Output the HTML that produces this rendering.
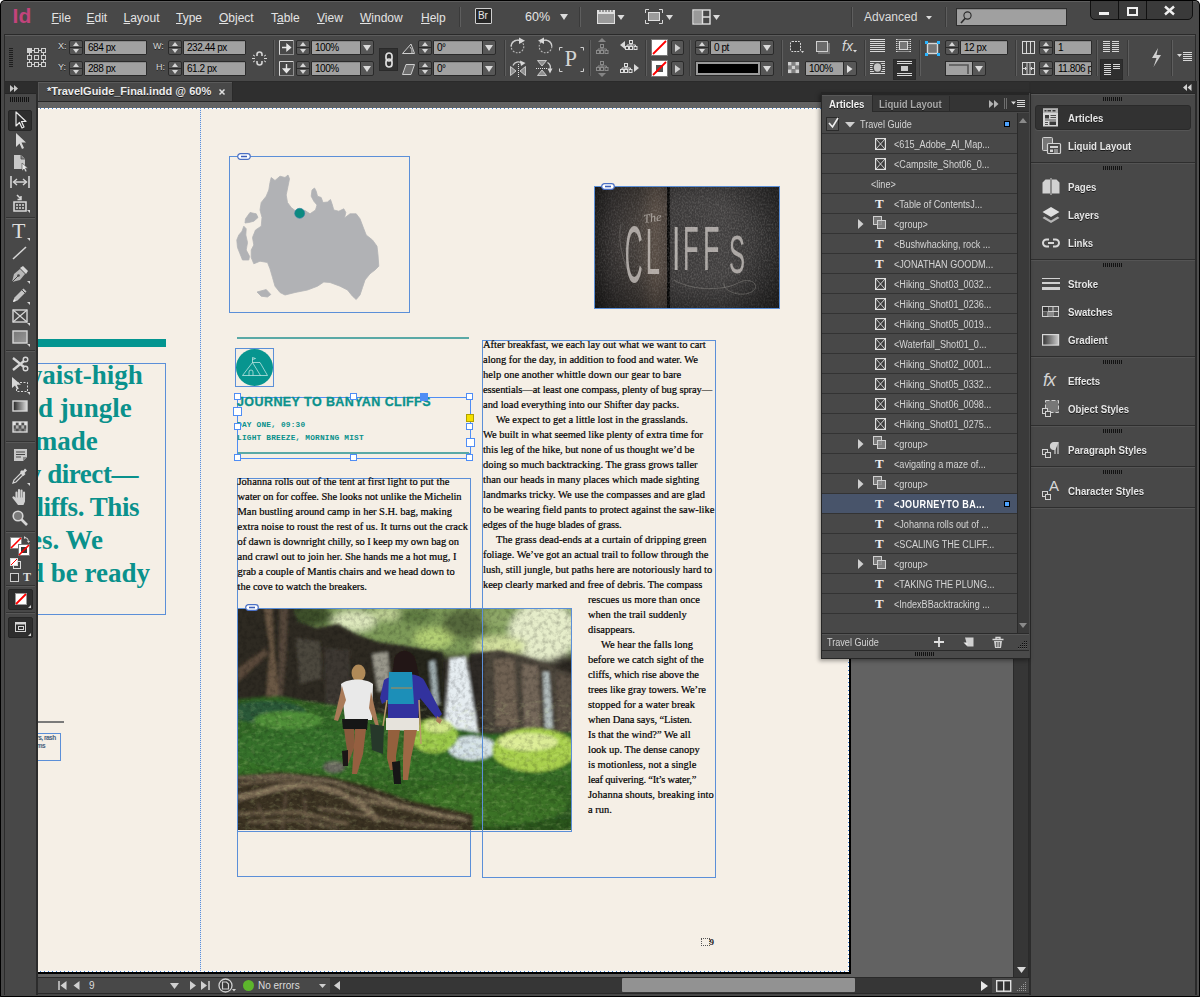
<!DOCTYPE html>
<html lang="en"><head><meta charset="utf-8"><title>TravelGuide_Final.indd @ 60% - InDesign</title>
<style>
html,body{margin:0;padding:0;background:#fff;}
body{width:1200px;height:997px;overflow:hidden;position:relative;font-family:"Liberation Sans",sans-serif;font-size:11px;color:#dcdcdc;}
div,svg,i,span.a{position:absolute;box-sizing:content-box;}
svg{overflow:visible;}
.t{white-space:nowrap;line-height:1;}
#win{left:0;top:0;width:1200px;height:997px;border-radius:5px 5px 0 0;background:#484848;overflow:hidden;}
#winb{left:0;top:0;width:1198px;height:995px;border:1px solid #000;border-radius:5px 5px 0 0;pointer-events:none;}
.menu{font-size:12px;color:#e4e4e4;top:12px;}
.menu u{text-decoration:underline;text-underline-offset:1px;}
.lbl{font-size:9px;color:#d8d8d8;text-shadow:0 1px 0 #222;}
.inp{height:15px;border:1px solid #2a2a2a;background:#a1a1a1;box-shadow:inset 0 1px 0 #8a8a8a;color:#000;font-size:10px;letter-spacing:-0.45px;line-height:14px;padding-left:3px;box-sizing:border-box;white-space:nowrap;overflow:hidden;border-radius:1px;}
.spin{width:12px;height:13px;border:1px solid #2a2a2a;background:#575757;border-radius:2px;}
.spin:before{content:"";position:absolute;left:0;top:6px;width:12px;height:1px;background:#2a2a2a;}
.spin i.u{left:3px;top:1px;width:0;height:0;border-left:3px solid transparent;border-right:3px solid transparent;border-bottom:4px solid #d6d6d6;}
.spin i.d{left:3px;top:8px;width:0;height:0;border-left:3px solid transparent;border-right:3px solid transparent;border-top:4px solid #d6d6d6;}
.dd{height:13px;border:1px solid #2a2a2a;background:#575757;border-radius:0 2px 2px 0;}
.dd i{left:50%;margin-left:-4px;top:4px;width:0;height:0;border-left:4px solid transparent;border-right:4px solid transparent;border-top:6px solid #dadada;}
.vsep{width:1px;background:#3a3a3a;box-shadow:1px 0 0 #5e5e5e;}
.grip{background:repeating-linear-gradient(90deg,#121212 0,#121212 1px,transparent 1px,transparent 2px);}
.gripv{background:repeating-linear-gradient(180deg,#1e1e1e 0,#1e1e1e 1px,transparent 1px,transparent 2px);}
.ptxt{font-size:10px;color:#d4d4d4;transform:scaleX(0.91);transform-origin:0 0;}
.sx{transform:scaleX(0.91);transform-origin:0 0;}
.row{left:0;width:195px;height:19px;border-bottom:1px solid #363636;}
.dock{font-size:10.5px;transform:scaleX(0.92);transform-origin:0 0;font-weight:bold;color:#e6e6e6;text-shadow:0 1px 0 #1a1a1a;}
.frame{border:1px solid #5b8fd8;}
.h{width:5px;height:5px;border:1px solid #4f8df5;background:#fff;}
.body{font-family:"Liberation Serif",serif;color:#000;-webkit-text-stroke:0.2px #000;font-size:10.5px;line-height:15px;height:15px;white-space:nowrap;}
.big{font-family:"Liberation Serif",serif;font-weight:bold;color:#0a918c;font-size:27px;line-height:33px;white-space:nowrap;}
</style></head>
<body><div id="win">
<div style="left:38px;top:101px;width:975px;height:876px;background:#626262;"></div>
<div style="left:38px;top:108px;width:811px;height:864px;background:#f5efe6;"></div>
<div style="left:38px;top:108px;width:812px;height:1px;background:repeating-linear-gradient(90deg,#fff 0,#fff 2px,#3f7fd0 2px,#3f7fd0 3px,#fff 3px,#fff 4px);"></div>
<div style="left:38px;top:971px;width:811px;height:1px;background:repeating-linear-gradient(90deg,#fff 0,#fff 2px,#3f7fd0 2px,#3f7fd0 3px,#fff 3px,#fff 4px);"></div>
<div style="left:38px;top:972px;width:813px;height:2px;background:#000;"></div>
<div style="left:848px;top:108px;width:1px;height:864px;background:repeating-linear-gradient(180deg,#fff 0,#fff 2px,#3f7fd0 2px,#3f7fd0 3px,#fff 3px,#fff 4px);"></div>
<div style="left:849px;top:108px;width:2px;height:866px;background:#000;"></div>
<div style="left:200px;top:108px;width:1px;height:864px;background:repeating-linear-gradient(180deg,#5b8fd8 0,#5b8fd8 1px,#dfe6f2 1px,#dfe6f2 2px);"></div>
<div style="left:38px;top:339px;width:128px;height:8px;background:#039590;"></div>
<div class="frame" style="left:37px;top:363px;width:127px;height:250px;"></div>
<div style="left:38px;top:359px;width:128px;height:240px;overflow:hidden;"><div class="big" style="right:23.2px;top:0px;">waist-high</div><div class="big" style="right:34.2px;top:33px;">d jungle</div><div class="big" style="right:68.3px;top:66px;">made</div><div class="big" style="right:28.0px;top:99px; letter-spacing:-0.45px;">y direct—</div><div class="big" style="right:27.0px;top:132px; letter-spacing:-0.45px;">liffs. This</div><div class="big" style="right:63.0px;top:165px;">es. We</div><div class="big" style="right:16.0px;top:198px;">d be ready</div></div>
<div style="left:38px;top:721px;width:26px;height:2px;background:#7a7a7a;"></div>
<div class="frame" style="left:37px;top:733px;width:22px;height:26px;"></div>
<div style="left:38px;top:733px;width:30px;height:12px;overflow:hidden;"><div class="t" style="right:12.3px;top:1.5px;font-size:6.5px;font-weight:bold;color:#46607e;letter-spacing:-0.5px;">ers, rash</div></div>
<div style="left:38px;top:742px;width:30px;height:12px;overflow:hidden;"><div class="t" style="right:22.8px;top:1px;font-size:6.5px;font-weight:bold;color:#46607e;letter-spacing:-0.5px;">ems</div></div>
<div class="frame" style="left:229px;top:156px;width:179px;height:155px;"></div>
<svg style="left:0;top:0" width="420" height="320" viewBox="0 0 420 320"><path d="M271.2 177.5 L275.0 180.5 L280.0 176.2 L285.0 177.5 L288.0 175.0 L289.5 178.8 L288.0 186.2 L286.2 195.0 L287.5 202.5 L291.2 207.5 L295.0 210.5 L300.0 209.5 L305.0 210.5 L310.0 213.8 L315.5 210.0 L317.0 205.0 L313.8 201.2 L311.2 196.2 L312.0 190.0 L314.5 188.0 L316.2 191.2 L317.5 196.2 L321.2 197.5 L323.0 202.5 L327.5 202.0 L330.5 199.5 L332.0 203.8 L333.8 210.0 L338.8 211.2 L343.8 208.8 L345.8 212.5 L344.5 218.0 L350.0 213.8 L356.2 213.8 L360.0 218.8 L363.8 228.8 L366.2 235.0 L372.5 240.0 L377.0 246.2 L378.0 255.0 L378.8 266.2 L375.0 270.0 L370.0 273.8 L365.0 280.0 L362.5 287.5 L360.0 295.0 L356.2 299.5 L352.5 296.2 L347.5 290.0 L340.0 286.2 L330.0 282.5 L323.8 282.0 L317.5 286.2 L307.5 290.0 L295.0 292.5 L285.0 295.0 L280.0 292.5 L275.0 286.2 L272.5 277.5 L270.0 268.8 L267.5 262.5 L260.0 261.2 L253.8 263.8 L251.2 257.5 L251.2 250.0 L253.8 245.0 L252.5 237.5 L255.5 230.0 L261.2 226.2 L262.0 217.5 L260.0 210.0 L261.2 202.5 L266.2 196.2 L268.8 190.0 L270.0 182.5Z M250.0 212.5 L256.2 213.8 L258.0 217.5 L253.8 221.2 L248.8 222.5 L245.0 223.0 L245.5 218.8Z M243.8 226.2 L246.2 228.8 L245.8 235.0 L247.5 242.5 L246.2 250.0 L249.5 256.2 L248.8 260.0 L242.5 260.0 L240.0 253.8 L237.5 247.5 L236.8 240.0 L238.8 235.0 L242.0 231.2Z M257.0 292.0 L266.2 289.5 L270.8 294.5 L267.5 297.0 L261.2 296.2Z" fill="#b1b2b5" stroke="#b1b2b5" stroke-width="0.800" stroke-linejoin="round"/><circle cx="299.700" cy="213.300" r="5" fill="#0d8a80"/><circle cx="299.700" cy="213.300" r="5" fill="none" stroke="#2f7fa8" stroke-width="0.800" opacity="0.700"/></svg>
<svg style="left:237px;top:152.5px;" width="14" height="7" viewBox="0 0 14 7"><rect x="0.700" y="0.700" width="12.600" height="5.600" rx="2.800" fill="#fff" stroke="#4a6fc4" stroke-width="1.200"/><path d="M4 3.500h6" stroke="#3d5fb8" stroke-width="1.600"/></svg>
<svg style="left:594px;top:186px;overflow:hidden" width="184.5" height="122" viewBox="0 0 184.5 122"><defs>
<linearGradient id="wd" x1="0" x2="1" y1="0" y2="0"><stop offset="0" stop-color="#2a2827"/><stop offset="0.100" stop-color="#3e3a39"/><stop offset="0.240" stop-color="#443e3a"/><stop offset="0.330" stop-color="#574c44"/><stop offset="0.392" stop-color="#4a413b"/><stop offset="0.396" stop-color="#080808"/><stop offset="0.408" stop-color="#0c0c0c"/><stop offset="0.414" stop-color="#3b3939"/><stop offset="0.700" stop-color="#424040"/><stop offset="1" stop-color="#2e2d2d"/></linearGradient>
<radialGradient id="vg" cx="0.55" cy="0.45" r="0.8"><stop offset="0.400" stop-color="#000" stop-opacity="0"/><stop offset="1" stop-color="#000" stop-opacity="0.600"/></radialGradient>
<filter id="gr" x="0" y="0" width="1" height="1"><feTurbulence type="fractalNoise" baseFrequency="0.7 0.5" numOctaves="2" seed="3"/><feColorMatrix values="0 0 0 0 0.560  0 0 0 0 0.540  0 0 0 0 0.520  0 0 0 1.100 -0.420"/></filter>
<filter id="bl"><feGaussianBlur stdDeviation="0.450"/></filter>
</defs>
<rect width="185" height="122" fill="url(#wd)"/>
<rect width="185" height="122" filter="url(#gr)" opacity="0.450"/>
<rect width="185" height="122" fill="url(#vg)"/>
<g filter="url(#bl)" fill="#e2ddd8" font-family="Liberation Sans,sans-serif">
<text x="50" y="37" font-family="Liberation Serif,serif" font-style="italic" font-size="12" opacity="0.600" transform="rotate(-8 50 37)">The</text>
<text transform="translate(30.8,96) scale(1.65,5.35)" font-size="15" opacity="0.660">C</text>
<text transform="translate(51.7,87.7) scale(1.7,4.3)" font-size="15" opacity="0.660">L</text>
<text transform="translate(78,84) scale(2,4.14)" font-size="15" opacity="0.700">I</text>
<text transform="translate(89,84) scale(1.7,4.24)" font-size="15" opacity="0.660">F</text>
<text transform="translate(109,84) scale(1.8,4.14)" font-size="15" opacity="0.660">F</text>
<text transform="translate(135,86.5) scale(1.6,3.6)" font-size="15" opacity="0.660">S</text>
</g>
<path d="M80 94c20 12 52 10 64 3c10-6 22 0 16 7c-9 9-32 2-30-7" fill="none" stroke="#bdb8b2" stroke-width="0.600" opacity="0.500"/>
<path d="M27 38c-4 16 2 42 14 58" fill="none" stroke="#bdb8b2" stroke-width="0.600" opacity="0.400"/>
</svg>
<div class="frame" style="left:594px;top:186px;width:183.5px;height:121px;"></div>
<svg style="left:601px;top:182.5px;" width="14" height="7" viewBox="0 0 14 7"><rect x="0.700" y="0.700" width="12.600" height="5.600" rx="2.800" fill="#fff" stroke="#4a6fc4" stroke-width="1.200"/><path d="M4 3.500h6" stroke="#3d5fb8" stroke-width="1.600"/></svg>
<div style="left:237px;top:337px;width:232px;height:2px;background:#5aa9a6;"></div>
<div class="frame" style="left:235px;top:348px;width:36.5px;height:36.5px;"></div>
<svg style="left:236px;top:349px;" width="37" height="37" viewBox="0 0 37 37"><circle cx="18.500" cy="18.500" r="18.500" fill="#07958f"/><path d="M6.500 26.500L16.500 13.500H24L31.500 26.500zM16.500 13.500L24.500 26.500M13 26.500v-3.500a2 2 0 0 1 4 0v3.500M16.500 13.500V8.500l3 1-3 1" fill="none" stroke="#d6efec" stroke-width="0.700"/></svg>
<div style="left:237px;top:396.5px;width:232px;height:55px;border:1px solid #4f8df5;"></div>
<div style="left:237px;top:396.5px;width:232px;height:60.5px;border:1px solid #4f8df5;"></div>
<div style="left:238px;top:452px;width:231px;height:2px;background:#5aa9a6;"></div>
<div class="t ln" style="left:237px;top:395.5px;font-size:12.5px;font-weight:bold;color:#0a918c;-webkit-text-stroke:0.3px #0a918c;letter-spacing:0.421px;">JOURNEY TO BANYAN CLIFFS</div>
<div class="t" style="left:237px;top:422px;font-family:&quot;Liberation Mono&quot;,monospace;font-weight:bold;font-size:7.800px;color:#0a918c;letter-spacing:0.200px;">DAY ONE, 09:30</div>
<div class="t" style="left:237px;top:434.5px;font-family:&quot;Liberation Mono&quot;,monospace;font-weight:bold;font-size:7.800px;color:#0a918c;letter-spacing:0.200px;">LIGHT BREEZE, MORNING MIST</div>
<div style="left:234.0px;top:393.0px;width:5px;height:5px;background:#fff;border:1px solid #4f8df5;"></div>
<div style="left:234.0px;top:454.0px;width:5px;height:5px;background:#fff;border:1px solid #4f8df5;"></div>
<div style="left:350.0px;top:393.0px;width:5px;height:5px;background:#fff;border:1px solid #4f8df5;"></div>
<div style="left:350.0px;top:454.0px;width:5px;height:5px;background:#fff;border:1px solid #4f8df5;"></div>
<div style="left:466.0px;top:393.0px;width:5px;height:5px;background:#fff;border:1px solid #4f8df5;"></div>
<div style="left:466.0px;top:454.0px;width:5px;height:5px;background:#fff;border:1px solid #4f8df5;"></div>
<div style="left:234px;top:423px;width:5px;height:5px;background:#fff;border:1px solid #4f8df5;"></div>
<div style="left:466px;top:423px;width:5px;height:5px;background:#fff;border:1px solid #4f8df5;"></div>
<div style="left:233px;top:407px;width:7px;height:7px;background:#fff;border:1px solid #4f8df5;"></div>
<div style="left:466px;top:438px;width:7px;height:7px;background:#fff;border:1px solid #4f8df5;"></div>
<div style="left:420px;top:392.5px;width:8px;height:8px;background:#4f8df5;"></div>
<div style="left:466px;top:414px;width:6px;height:6px;background:#f5e000;border:1px solid #b0a000;"></div>
<div class="frame" style="left:237px;top:478px;width:232px;height:396.5px;"></div>
<div class="body ln" style="left:237.5px;top:474px;letter-spacing:0.018px;">Johanna rolls out of the tent at first light to put the</div>
<div class="body ln" style="left:237.5px;top:489px;letter-spacing:-0.059px;">water on for coffee. She looks not unlike the Michelin</div>
<div class="body ln" style="left:237.5px;top:504px;letter-spacing:-0.022px;">Man bustling around camp in her S.H. bag, making</div>
<div class="body ln" style="left:237.5px;top:519px;letter-spacing:0.027px;">extra noise to roust the rest of us. It turns out the crack</div>
<div class="body ln" style="left:237.5px;top:534px;letter-spacing:-0.092px;">of dawn is downright chilly, so I keep my own bag on</div>
<div class="body ln" style="left:237.5px;top:549px;letter-spacing:-0.008px;">and crawl out to join her. She hands me a hot mug, I</div>
<div class="body ln" style="left:237.5px;top:564px;letter-spacing:-0.042px;">grab a couple of Mantis chairs and we head down to</div>
<div class="body ln" style="left:237.5px;top:579px;letter-spacing:-0.018px;">the cove to watch the breakers.</div>
<div class="frame" style="left:482px;top:340px;width:231.5px;height:535.5px;"></div>
<div class="body ln" style="left:483px;top:337px;letter-spacing:-0.029px;">After breakfast, we each lay out what we want to cart</div>
<div class="body ln" style="left:483px;top:352px;letter-spacing:-0.016px;">along for the day, in addition to food and water. We</div>
<div class="body ln" style="left:483px;top:367px;letter-spacing:0.039px;">help one another whittle down our gear to bare</div>
<div class="body ln" style="left:483px;top:382px;letter-spacing:-0.09px;">essentials—at least one compass, plenty of bug spray—</div>
<div class="body ln" style="left:483px;top:397px;letter-spacing:-0.024px;">and load everything into our Shifter day packs.</div>
<div class="body ln" style="left:496px;top:412px;letter-spacing:-0.008px;">We expect to get a little lost in the grasslands.</div>
<div class="body ln" style="left:483px;top:427px;letter-spacing:-0.037px;">We built in what seemed like plenty of extra time for</div>
<div class="body ln" style="left:483px;top:442px;letter-spacing:-0.054px;">this leg of the hike, but none of us thought we’d be</div>
<div class="body ln" style="left:483px;top:457px;letter-spacing:-0.046px;">doing so much backtracking. The grass grows taller</div>
<div class="body ln" style="left:483px;top:472px;letter-spacing:-0.016px;">than our heads in many places which made sighting</div>
<div class="body ln" style="left:483px;top:487px;letter-spacing:-0.01px;">landmarks tricky. We use the compasses and are glad</div>
<div class="body ln" style="left:483px;top:502px;letter-spacing:-0.018px;">to be wearing field pants to protect against the saw-like</div>
<div class="body ln" style="left:483px;top:517px;letter-spacing:-0.082px;">edges of the huge blades of grass.</div>
<div class="body ln" style="left:496px;top:532px;letter-spacing:0.002px;">The grass dead-ends at a curtain of dripping green</div>
<div class="body ln" style="left:483px;top:547px;letter-spacing:-0.062px;">foliage. We’ve got an actual trail to follow through the</div>
<div class="body ln" style="left:483px;top:562px;letter-spacing:-0.006px;">lush, still jungle, but paths here are notoriously hard to</div>
<div class="body ln" style="left:483px;top:577px;letter-spacing:-0.047px;">keep clearly marked and free of debris. The compass</div>
<div class="body ln" style="left:588px;top:592px;letter-spacing:0.074px;">rescues us more than once</div>
<div class="body ln" style="left:588px;top:607px;letter-spacing:0.019px;">when the trail suddenly</div>
<div class="body ln" style="left:588px;top:622px;letter-spacing:0.005px;">disappears.</div>
<div class="body ln" style="left:601px;top:637px;letter-spacing:0.006px;">We hear the falls long</div>
<div class="body ln" style="left:588px;top:652px;letter-spacing:-0.027px;">before we catch sight of the</div>
<div class="body ln" style="left:588px;top:667px;letter-spacing:-0.083px;">cliffs, which rise above the</div>
<div class="body ln" style="left:588px;top:682px;letter-spacing:-0.091px;">trees like gray towers. We’re</div>
<div class="body ln" style="left:588px;top:697px;letter-spacing:0.012px;">stopped for a water break</div>
<div class="body ln" style="left:588px;top:712px;letter-spacing:-0.131px;">when Dana says, “Listen.</div>
<div class="body ln" style="left:588px;top:727px;letter-spacing:-0.043px;">Is that the wind?” We all</div>
<div class="body ln" style="left:588px;top:742px;letter-spacing:-0.04px;">look up. The dense canopy</div>
<div class="body ln" style="left:588px;top:757px;letter-spacing:-0.015px;">is motionless, not a single</div>
<div class="body ln" style="left:588px;top:772px;letter-spacing:-0.227px;">leaf quivering. “It’s water,”</div>
<div class="body ln" style="left:588px;top:787px;letter-spacing:0.035px;">Johanna shouts, breaking into</div>
<div class="body ln" style="left:588px;top:802px;letter-spacing:0.016px;">a run.</div>
<svg style="left:238px;top:608px;overflow:hidden" width="333" height="222" viewBox="0 0 333 222"><defs>
<filter id="b2" x="-10%" y="-10%" width="120%" height="120%"><feGaussianBlur stdDeviation="1.600"/></filter>
<filter id="b1" x="-10%" y="-10%" width="120%" height="120%"><feGaussianBlur stdDeviation="0.700"/></filter>
<filter id="b4" x="-10%" y="-10%" width="120%" height="120%"><feGaussianBlur stdDeviation="3.500"/></filter>
<filter id="nz" x="0" y="0" width="1" height="1"><feTurbulence type="fractalNoise" baseFrequency="0.22" numOctaves="3" seed="7"/><feColorMatrix values="0 0 0 0 0  0 0 0 0 0  0 0 0 0 0  0 0 0 1.500 -0.620"/></filter>
<filter id="nzl" x="0" y="0" width="1" height="1"><feTurbulence type="fractalNoise" baseFrequency="0.16 0.26" numOctaves="3" seed="11"/><feColorMatrix values="0 0 0 0 0.850  0 0 0 0 1  0 0 0 0 0.450  0 0 0 1.700 -0.850"/></filter>
<linearGradient id="gs" x1="0" y1="0" x2="0" y2="1"><stop offset="0" stop-color="#2f6224"/><stop offset="0.500" stop-color="#366f26"/><stop offset="1" stop-color="#284e1d"/></linearGradient>
</defs>
<rect width="333" height="222" fill="#2c2822"/>
<g filter="url(#b4)">
<rect x="70" y="-10" width="270" height="58" fill="#7d9a58"/>
<ellipse cx="305" cy="24" rx="34" ry="30" fill="#e6edca"/>
<ellipse cx="262" cy="38" rx="26" ry="10" fill="#d3e09e"/>
<ellipse cx="116" cy="13" rx="22" ry="10" fill="#dfe9be"/>
<ellipse cx="150" cy="6" rx="16" ry="6" fill="#c5d69a"/>
<ellipse cx="196" cy="30" rx="20" ry="10" fill="#b4d074"/>
<ellipse cx="228" cy="16" rx="24" ry="15" fill="#56693c"/>
<ellipse cx="178" cy="8" rx="18" ry="8" fill="#5f7a42"/>
<ellipse cx="258" cy="10" rx="14" ry="10" fill="#8fa868"/>
<ellipse cx="72" cy="8" rx="22" ry="12" fill="#3c4f2a"/>
</g>
<g filter="url(#b2)">
<path d="M-5 -5H52L60 14 78 20 100 16 118 26 140 34 168 38 200 44 200 112 -5 112Z" fill="#2d2923"/>
<path d="M26 0L34 0 36 40 42 92 28 92 32 40Z" fill="#6b5844"/>
<path d="M42 0L50 0 48 50 44 92 40 92Z" fill="#54463a"/>
<path d="M0 60L28 40 30 46 0 74Z" fill="#5a4a3a"/>
<path d="M58 30L82 34 84 70 62 76Z" fill="#4c463c"/>
<path d="M86 40L112 42 110 96 88 100Z" fill="#3c3831"/>
<path d="M134 46L150 44 152 80 140 84Z" fill="#9a988c"/>
<path d="M168 40L205 44 208 112 168 112Z" fill="#26261f"/>
<path d="M232 46L246 44 246 112 232 112Z" fill="#2e2c26"/>
<path d="M246 44L262 42 290 50 316 58 334 66V128L246 124Z" fill="#4c443a"/>
<path d="M256 52L276 50 280 118 258 118Z" fill="#6f6253"/>
<path d="M284 56L300 58 302 120 286 120Z" fill="#75685a"/>
<path d="M318 66L334 70V124L320 122Z" fill="#5d5246"/>
<path d="M211 50L228 48 236 100 246 150 204 152 208 100Z" fill="#e6edf1"/>
<path d="M191 54L197 52 201 96 195 98Z" fill="#a0aeb0"/>
<path d="M305 64L311 64 315 120 307 120Z" fill="#b4bebe"/>
<path d="M-5 92L40 88 70 94 100 98 140 106 170 112 250 126 340 124V230H-5Z" fill="url(#gs)"/>
<ellipse cx="28" cy="104" rx="40" ry="11" fill="#2a5838"/>
<ellipse cx="60" cy="140" rx="64" ry="22" fill="#35702a"/>
<ellipse cx="50" cy="112" rx="34" ry="9" fill="#4f8f38"/>
<ellipse cx="234" cy="140" rx="24" ry="12" fill="#d5e2e8"/>
<ellipse cx="296" cy="142" rx="42" ry="22" fill="#a9d04e"/>
<ellipse cx="290" cy="134" rx="30" ry="9" fill="#dcec96"/>
<ellipse cx="196" cy="128" rx="24" ry="17" fill="#9bc94a"/>
<ellipse cx="200" cy="118" rx="14" ry="7" fill="#d2e68a"/>
<ellipse cx="250" cy="196" rx="80" ry="22" fill="#3a7226"/>
<path d="M-5 168L40 164 90 168 130 178 170 192 235 206 235 230H-5Z" fill="#3a3024"/>
<path d="M0 190L40 180 70 176 100 184 125 198 140 212" fill="none" stroke="#83725a" stroke-width="6"/>
<path d="M0 176L40 172 80 176" fill="none" stroke="#6a5b46" stroke-width="3"/>
<path d="M110 190L160 198 215 210" fill="none" stroke="#7a6a52" stroke-width="4"/>
<path d="M20 196L30 220M48 186L44 222M66 190L70 222" fill="none" stroke="#5e503e" stroke-width="2.500"/>
<path d="M0 206L60 204 110 216" fill="none" stroke="#6f604a" stroke-width="3.500"/>
<path d="M0 170L50 168 96 174 128 186" fill="none" stroke="#7a6b54" stroke-width="3"/>
<path d="M80 200L120 206 170 216 220 220" fill="none" stroke="#6e5f49" stroke-width="3"/>
<path d="M130 186L170 200 230 212" fill="none" stroke="#8a7a60" stroke-width="2.500"/>
<path d="M10 214L60 212 100 220" fill="none" stroke="#665843" stroke-width="3"/>
<ellipse cx="96" cy="159" rx="11" ry="6" fill="#6c6c62"/>
</g>
<rect width="333" height="222" filter="url(#nz)" opacity="0.300"/>
<rect y="92" width="333" height="130" filter="url(#nzl)" opacity="0.280"/>
<g filter="url(#b1)">
<!-- left hiker -->
<ellipse cx="120.500" cy="65" rx="7" ry="8.500" fill="#b08a58"/>
<path d="M118 70L116.500 88 120 88Z" fill="#a07c4a"/>
<path d="M103 76C110 70 128 70 135 76L134 112 107 112Z" fill="#e9e9e9"/>
<path d="M104 78L96 112 100 113 108 92Z" fill="#a97a58"/><path d="M133 84L141 118 138 119 131 100Z" fill="#a97a58"/>
<path d="M104 111H130L129 122 105 121Z" fill="#161616"/>
<path d="M106 121L109 142 105 152 110 156 116 140 116 121Z" fill="#8a5a3c"/>
<path d="M117 121L115 150 114 166 119 166 125 146 128 121Z" fill="#955f40"/>
<path d="M104 143L110 142 110 158 105 158Z" fill="#1c1814"/>
<!-- right hiker -->
<path d="M156 52C158 41 172 39 177 50C181 62 183 78 179 90L158 90C154 78 154 64 156 52Z" fill="#221814"/>
<path d="M146 72C158 64 180 64 186 72L204 106 199 111 182 90 180 112 150 112 150 92 144 96 142 90Z" fill="#33329e"/>
<path d="M151 64H174L176 96 150 96Z" fill="#1f8fb8"/>
<path d="M153 80H174" stroke="#b58a4a" stroke-width="1"/>
<path d="M148 110H181L181 123 148 122Z" fill="#e6e3dc"/>
<path d="M150 122L149 150 152 162 158 162 158 148 162 122Z" fill="#94603e"/>
<path d="M166 122L165 150 165 172 170 172 173 150 179 122Z" fill="#9d6845"/>
<path d="M154 154L162 153 163 176 156 176Z" fill="#141414"/>
<path d="M149 92L145 118" fill="none" stroke="#b99a6a" stroke-width="1.500"/><path d="M181 92L183 136" fill="none" stroke="#b99a6a" stroke-width="1.500"/>
<path d="M132 116L146 118 145 146 134 142Z" fill="#26382a"/>
<path d="M199 108L204 112 202 116 198 113Z" fill="#a97a58"/>
</g>
</svg>
<div style="left:237px;top:607.5px;width:332.5px;height:222px;border:1px solid #5b8fd8;"></div>
<div style="left:482px;top:608px;width:1px;height:222px;background:#5b8fd8;"></div>
<svg style="left:245px;top:604px;" width="14" height="7" viewBox="0 0 14 7"><rect x="0.700" y="0.700" width="12.600" height="5.600" rx="2.800" fill="#fff" stroke="#4a6fc4" stroke-width="1.200"/><path d="M4 3.500h6" stroke="#3d5fb8" stroke-width="1.600"/></svg>
<div style="left:701px;top:938px;width:7px;height:6px;border:1px dotted #555;"></div>
<div class="t" style="left:709.5px;top:937.5px;font-family:&quot;Liberation Serif&quot;,serif;font-weight:bold;font-size:9px;color:#222;">9</div>
<div style="left:1013px;top:101px;width:14px;height:876px;background:#363636;border-left:1px solid #2a2a2a;border-right:1px solid #2a2a2a;"></div>
<svg style="left:1016.5px;top:966.5px;" width="9" height="6" viewBox="0 0 9 6"><path d="M0 0h9l-4.500 6z" fill="#d8d8d8"/></svg>
<div style="left:38px;top:977px;width:991px;height:15px;background:#484848;border-top:1px solid #2a2a2a;border-bottom:1px solid #2a2a2a;"></div>
<div style="left:330px;top:978px;width:662px;height:15px;background:#363636;"></div>
<div style="left:622px;top:978px;width:233px;height:14px;background:#929292;border-radius:1px;"></div>
<svg style="left:58px;top:981px;" width="9" height="9" viewBox="0 0 9 9"><path d="M1 0v9" stroke="#d0d0d0" stroke-width="1.500"/><path d="M8.500 0v9l-6-4.500z" fill="#d0d0d0"/></svg>
<svg style="left:73px;top:981px;" width="7" height="9" viewBox="0 0 7 9"><path d="M6.500 0v9l-6-4.500z" fill="#d0d0d0"/></svg>
<div class="t" style="left:89px;top:981px;font-size:10px;color:#dcdcdc;">9</div>
<svg style="left:170px;top:983px;" width="9" height="6" viewBox="0 0 9 6"><path d="M0 0h9l-4.500 6z" fill="#d0d0d0"/></svg>
<svg style="left:190px;top:981px;" width="7" height="9" viewBox="0 0 7 9"><path d="M0 0v9l6-4.500z" fill="#d0d0d0"/></svg>
<svg style="left:201px;top:981px;" width="9" height="9" viewBox="0 0 9 9"><path d="M8 0v9" stroke="#d0d0d0" stroke-width="1.500"/><path d="M0 0v9l6-4.500z" fill="#d0d0d0"/></svg>
<svg style="left:218px;top:978px;" width="18" height="15" viewBox="0 0 18 15"><circle cx="7.500" cy="7.500" r="6.500" fill="#3a3a3a" stroke="#d0d0d0" stroke-width="1.300"/><path d="M4.500 4h4l2 2v5h-6z" fill="none" stroke="#d0d0d0" stroke-width="1.200"/><path d="M14 11h4l-2 2.500z" fill="#d0d0d0"/></svg>
<div style="left:243px;top:980px;width:11px;height:11px;background:#5db52c;border-radius:6px;"></div>
<div class="t" style="left:258px;top:981px;font-size:10px;color:#dcdcdc;">No errors</div>
<svg style="left:319px;top:984px;" width="7" height="4" viewBox="0 0 7 4"><path d="M0 0h7l-3.500 4z" fill="#d0d0d0"/></svg>
<svg style="left:334px;top:981px;" width="6" height="9" viewBox="0 0 6 9"><path d="M6 0v9l-6-4.500z" fill="#d0d0d0"/></svg>
<svg style="left:981px;top:981px;" width="7" height="10" viewBox="0 0 7 10"><path d="M0 0v10l7-5z" fill="#e8e8e8"/></svg>
<svg style="left:996px;top:980px;" width="16" height="12" viewBox="0 0 16 12"><rect x="0.700" y="0.700" width="14" height="10.500" fill="#333" stroke="#e0e0e0" stroke-width="1.400"/><path d="M7.700 0v12" stroke="#e0e0e0" stroke-width="1.400"/></svg>
<svg style="left:1017px;top:982px;" width="10" height="10" viewBox="0 0 10 10"><rect x="8" y="0" width="1" height="1" fill="#9a9a9a"/><rect x="6" y="2" width="1" height="1" fill="#9a9a9a"/><rect x="8" y="2" width="1" height="1" fill="#9a9a9a"/><rect x="4" y="4" width="1" height="1" fill="#9a9a9a"/><rect x="6" y="4" width="1" height="1" fill="#9a9a9a"/><rect x="8" y="4" width="1" height="1" fill="#9a9a9a"/><rect x="2" y="6" width="1" height="1" fill="#9a9a9a"/><rect x="4" y="6" width="1" height="1" fill="#9a9a9a"/><rect x="6" y="6" width="1" height="1" fill="#9a9a9a"/><rect x="8" y="6" width="1" height="1" fill="#9a9a9a"/><rect x="0" y="8" width="1" height="1" fill="#9a9a9a"/><rect x="2" y="8" width="1" height="1" fill="#9a9a9a"/><rect x="4" y="8" width="1" height="1" fill="#9a9a9a"/><rect x="6" y="8" width="1" height="1" fill="#9a9a9a"/><rect x="8" y="8" width="1" height="1" fill="#9a9a9a"/></svg>
<div style="left:1px;top:1px;width:1198px;height:1px;background:#5e5e5e"></div>
<div class="t" style="left:12.5px;top:5px;font-size:21px;font-weight:bold;color:#c2447c;letter-spacing:0.2px;">Id</div>
<div class="t menu" style="left:51.5px;top:11.7px;"><u>F</u>ile</div>
<div class="t menu" style="left:86.5px;top:11.7px;"><u>E</u>dit</div>
<div class="t menu" style="left:123.5px;top:11.7px;"><u>L</u>ayout</div>
<div class="t menu" style="left:176.0px;top:11.7px;"><u>T</u>ype</div>
<div class="t menu" style="left:219.0px;top:11.7px;"><u>O</u>bject</div>
<div class="t menu" style="left:271.0px;top:11.7px;">T<u>a</u>ble</div>
<div class="t menu" style="left:317.0px;top:11.7px;"><u>V</u>iew</div>
<div class="t menu" style="left:360.0px;top:11.7px;"><u>W</u>indow</div>
<div class="t menu" style="left:421.0px;top:11.7px;"><u>H</u>elp</div>
<div class="vsep" style="left:459px;top:7px;height:20px"></div>
<div style="left:475px;top:8px;width:15px;height:14px;border:1px solid #d0d0d0;background:#262626;border-radius:1px;"><div class="t" style="left:2px;top:2px;font-size:10px;color:#e6e6e6;letter-spacing:-0.2px">Br</div></div>
<div class="t" style="left:525px;top:11px;font-size:12.5px;color:#e4e4e4;">60%</div>
<svg style="left:560px;top:14px;" width="8" height="6" viewBox="0 0 8 6"><path d="M0 0h8l-4 6z" fill="#dcdcdc"/></svg>
<div class="vsep" style="left:579px;top:7px;height:20px"></div>
<svg style="left:597px;top:9px;" width="28" height="16" viewBox="0 0 28 16"><rect x="0.5" y="4.5" width="17" height="10" fill="#9a9a9a" stroke="#e0e0e0"/>
<rect x="0" y="1" width="18" height="4" fill="#e0e0e0"/><path d="M3 1v2M6 1v2M9 1v2M12 1v2M15 1v2" stroke="#484848"/>
<path d="M20.5 6h7l-3.5 5z" fill="#dcdcdc"/></svg>
<svg style="left:645px;top:9px;" width="28" height="16" viewBox="0 0 28 16"><path d="M0.5 4V0.5H4M14 0.5h3.5V4M0.5 11v3.5H4M14 14.5h3.5V11" fill="none" stroke="#d8d8d8"/>
<rect x="3.5" y="3.5" width="11" height="8" fill="#9a9a9a" stroke="#e0e0e0"/>
<path d="M21 6h7l-3.5 5z" fill="#dcdcdc"/></svg>
<svg style="left:692px;top:9px;" width="28" height="16" viewBox="0 0 28 16"><rect x="1" y="1" width="17" height="14" fill="none" stroke="#e0e0e0" stroke-width="1.4"/>
<rect x="2" y="2" width="8" height="12" fill="#9a9a9a"/><path d="M10.5 1v14M10.5 8h7.5" stroke="#e0e0e0" stroke-width="1.4"/>
<path d="M21 6h7l-3.5 5z" fill="#dcdcdc"/></svg>
<div class="vsep" style="left:851px;top:7px;height:20px"></div>
<div class="t" style="left:864px;top:11px;font-size:12px;color:#dcdcdc;">Advanced</div>
<svg style="left:926px;top:16px;" width="6" height="4" viewBox="0 0 6 4"><path d="M0 0h6l-3 3.5z" fill="#dcdcdc"/></svg>
<div class="vsep" style="left:945px;top:7px;height:20px"></div>
<div style="left:956px;top:8px;width:109px;height:16px;border:1px solid #2e2e2e;background:#a0a0a0;box-shadow:inset 0 1px 0 #888;"><svg style="left:3px;top:1px;" width="13" height="13" viewBox="0 0 13 13"><circle cx="7.5" cy="5.5" r="3.6" fill="none" stroke="#2a2a2a" stroke-width="1.1"/><path d="M5 8.500L1 13" stroke="#2a2a2a" stroke-width="1.600"/></svg></div>
<div style="left:1090px;top:-1px;width:101px;height:19px;border:1px solid #111;border-radius:0 0 5px 5px;background:#3a3a3a;"><div style="left:27px;top:0px;width:1px;height:20px;background:#111"></div><div style="left:55px;top:0px;width:1px;height:20px;background:#111"></div><div style="left:8px;top:12px;width:10px;height:3px;background:#f0f0f0"></div><div style="left:36px;top:7px;width:7px;height:5px;border:2px solid #f0f0f0"></div><svg style="left:73px;top:6px;" width="11" height="9" viewBox="0 0 11 9"><path d="M1 0.5L10 8.5M10 0.5L1 8.5" stroke="#f0f0f0" stroke-width="2.4"/></svg></div>
<div style="left:4px;top:34px;width:1190px;height:46px;border:1px solid #2a2a2a;background:#484848;box-shadow:inset 0 1px 0 #5c5c5c;"></div>
<div class="gripv" style="left:9px;top:48px;width:4px;height:20px;"></div>
<svg style="left:27px;top:48px;" width="19" height="19" viewBox="0 0 19 19"><rect x="0" y="0" width="5" height="5" fill="#d0d0d0"/><rect x="7.5" y="0.5" width="4" height="4" fill="none" stroke="#d0d0d0"/><rect x="14.5" y="0.5" width="4" height="4" fill="none" stroke="#d0d0d0"/><rect x="0.5" y="7.5" width="4" height="4" fill="none" stroke="#d0d0d0"/><rect x="7.5" y="7.5" width="4" height="4" fill="none" stroke="#d0d0d0"/><rect x="14.5" y="7.5" width="4" height="4" fill="none" stroke="#d0d0d0"/><rect x="0.5" y="14.5" width="4" height="4" fill="none" stroke="#d0d0d0"/><rect x="7.5" y="14.5" width="4" height="4" fill="none" stroke="#d0d0d0"/><rect x="14.5" y="14.5" width="4" height="4" fill="none" stroke="#d0d0d0"/><path d="M5 2.5h2M12 2.5h2M5 16.5h2M12 16.5h2M2.5 5v2M2.5 12v2M16.5 5v2M16.5 12v2" stroke="#d0d0d0"/></svg>
<div class="t lbl" style="left:58px;top:42px;">X:</div>
<div class="t lbl" style="left:58px;top:63px;">Y:</div>
<div class="spin" style="left:69px;top:40px"><i class="u"></i><i class="d"></i></div>
<div class="inp" style="left:84px;top:40px;width:63px;">684 px</div>
<div class="spin" style="left:69px;top:61px"><i class="u"></i><i class="d"></i></div>
<div class="inp" style="left:84px;top:61px;width:63px;">288 px</div>
<div class="t lbl" style="left:153px;top:42px;">W:</div>
<div class="t lbl" style="left:156px;top:63px;">H:</div>
<div class="spin" style="left:168px;top:40px"><i class="u"></i><i class="d"></i></div>
<div class="inp" style="left:183px;top:40px;width:63px;">232.44 px</div>
<div class="spin" style="left:168px;top:61px"><i class="u"></i><i class="d"></i></div>
<div class="inp" style="left:183px;top:61px;width:63px;">61.2 px</div>
<svg style="left:252px;top:50px;" width="15" height="17" viewBox="0 0 15 17"><path d="M5 6V4.5a2.5 2.5 0 0 1 5 0V6M5 11v1.5a2.5 2.5 0 0 0 5 0V11" fill="none" stroke="#d4d4d4" stroke-width="1.6"/>
<path d="M0 8.5h3M12 8.5h3M1 5l2 1.2M14 5l-2 1.2M1 12l2-1.2M14 12l-2-1.2" stroke="#d4d4d4"/></svg>
<div class="vsep" style="left:273px;top:40px;height:36px"></div>
<svg style="left:279px;top:40px;" width="15" height="15" viewBox="0 0 15 15"><path d="M0.5 14.5V0.5H14.5" fill="none" stroke="#d8d8d8"/><path d="M0.5 14.5H14.5V0.5" fill="none" stroke="#d8d8d8" stroke-dasharray="1 1"/><path d="M3 7.5h7M8 4.5l3.5 3L8 10.5z" stroke="#e6e6e6" fill="#e6e6e6" stroke-width="1.4"/></svg>
<svg style="left:279px;top:61px;" width="15" height="15" viewBox="0 0 15 15"><path d="M0.5 14.5V0.5H14.5" fill="none" stroke="#d8d8d8"/><path d="M0.5 14.5H14.5V0.5" fill="none" stroke="#d8d8d8" stroke-dasharray="1 1"/><path d="M7.5 3v7M4.5 8l3 3.5L10.5 8z" stroke="#e6e6e6" fill="#e6e6e6" stroke-width="1.4"/></svg>
<div class="spin" style="left:296px;top:40px"><i class="u"></i><i class="d"></i></div>
<div class="inp" style="left:311px;top:40px;width:50px;">100%</div>
<div class="dd" style="left:360px;top:40px;width:12px"><i></i></div>
<div class="spin" style="left:296px;top:61px"><i class="u"></i><i class="d"></i></div>
<div class="inp" style="left:311px;top:61px;width:50px;">100%</div>
<div class="dd" style="left:360px;top:61px;width:12px"><i></i></div>
<div style="left:379px;top:48px;width:17px;height:21px;background:#323232;border:1px solid #2a2a2a;"><svg style="left:5px;top:3px;" width="8" height="16" viewBox="0 0 8 16"><rect x="1" y="1" width="6" height="8" rx="3" fill="none" stroke="#e0e0e0" stroke-width="1.7"/><rect x="1" y="7" width="6" height="8" rx="3" fill="none" stroke="#e0e0e0" stroke-width="1.7"/></svg></div>
<svg style="left:402px;top:43px;" width="13" height="11" viewBox="0 0 13 11"><path d="M0.5 10.5h12L9 1z" fill="none" stroke="#cfcfcf"/><path d="M8 4a6 6 0 0 1 2 6" fill="none" stroke="#cfcfcf"/></svg>
<svg style="left:402px;top:64px;" width="13" height="11" viewBox="0 0 13 11"><path d="M4 0.5h8.5L9 10.5H0.5z" fill="#6c6c6c" stroke="#cfcfcf"/></svg>
<div class="spin" style="left:418px;top:40px"><i class="u"></i><i class="d"></i></div>
<div class="inp" style="left:433px;top:40px;width:50px;">0°</div>
<div class="dd" style="left:482px;top:40px;width:12px"><i></i></div>
<div class="spin" style="left:418px;top:61px"><i class="u"></i><i class="d"></i></div>
<div class="inp" style="left:433px;top:61px;width:50px;">0°</div>
<div class="dd" style="left:482px;top:61px;width:12px"><i></i></div>
<div class="vsep" style="left:504px;top:40px;height:36px"></div>
<svg style="left:510px;top:37px;" width="17" height="17" viewBox="0 0 17 17"><circle cx="7.5" cy="9.5" r="6.3" fill="none" stroke="#b8b8b8" stroke-width="1.1" stroke-dasharray="1.8 1.4"/><path d="M1.2 9.500a6.300 6.300 0 0 1 10-5.100" fill="none" stroke="#d0d0d0" stroke-width="1.300"/><path d="M9 0.500l6 3.200-6 3.200z" fill="#d8d8d8"/></svg>
<svg style="left:536px;top:37px;" width="17" height="17" viewBox="0 0 17 17"><circle cx="9.5" cy="9.5" r="6.3" fill="none" stroke="#b8b8b8" stroke-width="1.1" stroke-dasharray="1.8 1.4"/><path d="M15.800 9.500a6.300 6.300 0 0 0-10-5.100" fill="none" stroke="#d0d0d0" stroke-width="1.300"/><path d="M8 0.500l-6 3.200 6 3.200z" fill="#d8d8d8"/></svg>
<svg style="left:510px;top:59px;" width="17" height="18" viewBox="0 0 17 18"><path d="M0.500 7.500v9l5.500-4.500zM15.500 7.500v9l-5.500-4.500z" fill="#8e8e8e" stroke="#d0d0d0" stroke-width="0.900"/><path d="M8.500 5v13" stroke="#e0e0e0" stroke-dasharray="1 1"/><path d="M3 6.500a5.500 5.500 0 0 1 9-2" fill="none" stroke="#d0d0d0" stroke-width="1.300"/><path d="M10 1.500l5.500 2.500-4.500 3z" fill="#d8d8d8"/></svg>
<svg style="left:536px;top:60px;" width="17" height="17" viewBox="0 0 17 17"><path d="M1.500 0.500h9l-4.500 5.500zM1.500 15.500h9l-4.500-5.500z" fill="#8e8e8e" stroke="#d0d0d0" stroke-width="0.900"/><path d="M0 8.500h12" stroke="#e0e0e0" stroke-dasharray="1 1"/><path d="M11.500 2.500a6 6 0 0 1 2.500 7" fill="none" stroke="#d0d0d0" stroke-width="1.300"/><path d="M11.500 8.500h5l-2.500 5z" fill="#d8d8d8"/></svg>
<svg style="left:559px;top:47px;" width="25" height="25" viewBox="0 0 25 25"><path d="M0.500 3.500V0.500H3.500M21.500 0.500h3V3.500M0.500 21.500v3H3.500M21.500 24.500h3V21.500" fill="none" stroke="#cfcfcf"/></svg>
<div class="t" style="left:564.5px;top:48px;font-family:&quot;Liberation Serif&quot;,serif;font-size:22.5px;color:#d4d4d4;">P</div>
<div class="vsep" style="left:589px;top:40px;height:36px"></div>
<svg style="left:598px;top:38px;" width="8" height="4" viewBox="0 0 8 4"><path d="M0 4h8l-4-4z" fill="#858585"/></svg>
<svg style="left:596px;top:44px;" width="13" height="10" viewBox="0 0 13 10"><rect x="4.500" y="0.500" width="3" height="3" fill="none" stroke="#8a8a8a"/><rect x="0.500" y="6.500" width="3" height="3" fill="none" stroke="#8a8a8a"/><rect x="4.500" y="6.500" width="3" height="3" fill="none" stroke="#8a8a8a"/><rect x="9" y="6.500" width="3" height="3" fill="none" stroke="#8a8a8a"/><path d="M6 3.500v3M2 6.500v-1.500h8.500v1.500" fill="none" stroke="#8a8a8a"/></svg>
<svg style="left:596px;top:61px;" width="13" height="10" viewBox="0 0 13 10"><rect x="4.500" y="0.500" width="3" height="3" fill="none" stroke="#8a8a8a"/><rect x="0.500" y="6.500" width="3" height="3" fill="none" stroke="#8a8a8a"/><rect x="4.500" y="6.500" width="3" height="3" fill="none" stroke="#8a8a8a"/><rect x="9" y="6.500" width="3" height="3" fill="none" stroke="#8a8a8a"/><path d="M6 3.500v3M2 6.500v-1.500h8.500v1.500" fill="none" stroke="#8a8a8a"/></svg>
<svg style="left:598px;top:73px;" width="8" height="4" viewBox="0 0 8 4"><path d="M0 0h8l-4 4z" fill="#858585"/></svg>
<svg style="left:620px;top:41px;" width="5" height="8" viewBox="0 0 5 8"><path d="M5 0v8l-5-4z" fill="#d8d8d8"/></svg>
<svg style="left:625px;top:40px;" width="13" height="10" viewBox="0 0 13 10"><rect x="4.500" y="0.500" width="3" height="3" fill="none" stroke="#dcdcdc"/><rect x="0.500" y="6.500" width="3" height="3" fill="none" stroke="#dcdcdc"/><rect x="4.500" y="6.500" width="3" height="3" fill="none" stroke="#dcdcdc"/><rect x="9" y="6.500" width="3" height="3" fill="none" stroke="#dcdcdc"/><path d="M6 3.500v3M2 6.500v-1.500h8.500v1.500" fill="none" stroke="#dcdcdc"/></svg>
<svg style="left:620px;top:63px;" width="13" height="10" viewBox="0 0 13 10"><rect x="4.500" y="0.500" width="3" height="3" fill="none" stroke="#dcdcdc"/><rect x="0.500" y="6.500" width="3" height="3" fill="none" stroke="#dcdcdc"/><rect x="4.500" y="6.500" width="3" height="3" fill="none" stroke="#dcdcdc"/><rect x="9" y="6.500" width="3" height="3" fill="none" stroke="#dcdcdc"/><path d="M6 3.500v3M2 6.500v-1.500h8.500v1.500" fill="none" stroke="#dcdcdc"/></svg>
<svg style="left:634px;top:64px;" width="5" height="8" viewBox="0 0 5 8"><path d="M0 0v8l5-4z" fill="#d8d8d8"/></svg>
<div class="vsep" style="left:645px;top:40px;height:36px"></div>
<div style="left:651px;top:39px;width:15px;height:15px;background:#fff;border:1px solid #777;"><svg style="left:0px;top:0px;" width="15" height="15" viewBox="0 0 15 15"><path d="M1 14L14 1" stroke="#ff0000" stroke-width="1.8"/></svg></div>
<div style="left:651px;top:60px;width:15px;height:15px;background:#fff;border:1px solid #777;"><div style="left:4px;top:4px;width:7px;height:7px;background:#555"></div><svg style="left:0px;top:0px;" width="15" height="15" viewBox="0 0 15 15"><path d="M1 14L14 1" stroke="#ff0000" stroke-width="1.8"/></svg></div>
<div style="left:671px;top:40px;width:11px;height:13px;border:1px solid #2a2a2a;background:#575757;border-radius:2px;"><svg style="left:3px;top:3px;" width="6" height="8" viewBox="0 0 6 8"><path d="M0 0v8l5.5-4z" fill="#d0d0d0"/></svg></div>
<div style="left:671px;top:61px;width:11px;height:13px;border:1px solid #2a2a2a;background:#575757;border-radius:2px;"><svg style="left:3px;top:3px;" width="6" height="8" viewBox="0 0 6 8"><path d="M0 0v8l5.5-4z" fill="#d0d0d0"/></svg></div>
<div class="vsep" style="left:689px;top:40px;height:36px"></div>
<div class="spin" style="left:695px;top:40px"><i class="u"></i><i class="d"></i></div>
<div class="inp" style="left:710px;top:40px;width:51px;">0 pt</div>
<div class="dd" style="left:760px;top:40px;width:12px"><i></i></div>
<div style="left:695px;top:61px;width:64px;height:13px;border:1px solid #2a2a2a;background:#9a9a9a;"><div style="left:2px;top:2px;width:60px;height:9px;background:#000"></div></div>
<div class="dd" style="left:760px;top:61px;width:12px"><i></i></div>
<div class="vsep" style="left:781px;top:40px;height:36px"></div>
<svg style="left:790px;top:41px;" width="14" height="12" viewBox="0 0 14 12"><rect x="0.5" y="0.5" width="10" height="10" rx="1.5" fill="#3c3c3c" stroke="#d8d8d8" stroke-dasharray="2 1"/><path d="M11 10h3l-1.5 2z" fill="#d8d8d8"/></svg>
<svg style="left:816px;top:41px;" width="14" height="13" viewBox="0 0 14 13"><rect x="2" y="2" width="12" height="11" fill="#888" opacity="0.7"/><rect x="0.5" y="0.5" width="11" height="10" fill="#6a6a6a" stroke="#d0d0d0"/></svg>
<div class="t" style="left:842px;top:39px;font-size:14px;font-style:italic;color:#d8d8d8;font-family:&quot;Liberation Sans&quot;,sans-serif;">fx</div>
<svg style="left:853px;top:50px;" width="4" height="3" viewBox="0 0 4 3"><path d="M0 0h4l-2 2.5z" fill="#d8d8d8"/></svg>
<svg style="left:788px;top:62px;" width="11" height="11" viewBox="0 0 11 11"><rect x="0.0" y="0.0" width="3.7" height="3.7" fill="#d0d0d0"/><rect x="3.7" y="0.0" width="3.7" height="3.7" fill="#808080"/><rect x="7.4" y="0.0" width="3.7" height="3.7" fill="#d0d0d0"/><rect x="0.0" y="3.7" width="3.7" height="3.7" fill="#808080"/><rect x="3.7" y="3.7" width="3.7" height="3.7" fill="#d0d0d0"/><rect x="7.4" y="3.7" width="3.7" height="3.7" fill="#808080"/><rect x="0.0" y="7.4" width="3.7" height="3.7" fill="#d0d0d0"/><rect x="3.7" y="7.4" width="3.7" height="3.7" fill="#808080"/><rect x="7.4" y="7.4" width="3.7" height="3.7" fill="#d0d0d0"/></svg>
<div class="inp" style="left:805px;top:61px;width:39px;">100%</div>
<div style="left:843px;top:61px;width:12px;height:13px;border:1px solid #2a2a2a;background:#575757;border-radius:0 2px 2px 0;"><svg style="left:3px;top:3px;" width="6" height="8" viewBox="0 0 6 8"><path d="M0 0v8l5.5-4z" fill="#e0e0e0"/></svg></div>
<div class="vsep" style="left:864px;top:40px;height:36px"></div>
<svg style="left:870px;top:39px;" width="15" height="14" viewBox="0 0 15 14"><path d="M0 0.5H15" stroke="#d8d8d8"/><path d="M0 2.5H15" stroke="#d8d8d8"/><path d="M0 4.5H15" stroke="#d8d8d8"/><path d="M0 6.5H15" stroke="#d8d8d8"/><path d="M0 8.5H15" stroke="#d8d8d8"/><path d="M0 10.5H15" stroke="#d8d8d8"/><path d="M0 12.5H15" stroke="#d8d8d8"/></svg>
<svg style="left:896px;top:39px;" width="15" height="14" viewBox="0 0 15 14"><path d="M0 0.5H15" stroke="#d8d8d8"/><path d="M0 2.5H15" stroke="#d8d8d8"/><path d="M0 4.5H15" stroke="#d8d8d8"/><path d="M0 6.5H15" stroke="#d8d8d8"/><path d="M0 8.5H15" stroke="#d8d8d8"/><path d="M0 10.5H15" stroke="#d8d8d8"/><path d="M0 12.5H15" stroke="#d8d8d8"/><rect x="3.5" y="2.5" width="8" height="8" fill="#777" stroke="#d8d8d8"/><rect x="2" y="1" width="11" height="11" fill="none" stroke="#484848" stroke-width="1"/></svg>
<svg style="left:870px;top:61px;" width="15" height="14" viewBox="0 0 15 14"><path d="M0 0.5H15" stroke="#d8d8d8"/><path d="M0 2.5H15" stroke="#d8d8d8"/><path d="M0 4.5H15" stroke="#d8d8d8"/><path d="M0 6.5H15" stroke="#d8d8d8"/><path d="M0 8.5H15" stroke="#d8d8d8"/><path d="M0 10.5H15" stroke="#d8d8d8"/><path d="M0 12.5H15" stroke="#d8d8d8"/><ellipse cx="7.5" cy="6.5" rx="5" ry="5.5" fill="#484848"/><ellipse cx="7.5" cy="6.5" rx="3.6" ry="4.2" fill="#c4c4c4"/></svg>
<div style="left:893px;top:59px;width:21px;height:19px;background:#2f2f2f;border:1px solid #2a2a2a;"><svg style="left:3px;top:1px;" width="15" height="15" viewBox="0 0 15 15"><path d="M0 0.5H15" stroke="#d8d8d8"/><path d="M0 2.5H15" stroke="#d8d8d8"/><path d="M0 12.5H15" stroke="#d8d8d8"/><path d="M0 14.5H15" stroke="#d8d8d8"/><rect x="4" y="5" width="7" height="5" fill="#c8c8c8"/></svg></div>
<div class="vsep" style="left:919px;top:40px;height:36px"></div>
<svg style="left:925px;top:41px;" width="15" height="15" viewBox="0 0 15 15"><rect x="2.5" y="2.5" width="10" height="10" fill="#777" stroke="#d8d8d8" stroke-width="1.4"/><rect x="0" y="0" width="3" height="3" fill="#29b4ff"/><rect x="12" y="0" width="3" height="3" fill="#29b4ff"/><rect x="0" y="12" width="3" height="3" fill="#29b4ff"/><rect x="12" y="12" width="3" height="3" fill="#29b4ff"/></svg>
<div class="spin" style="left:945px;top:40px"><i class="u"></i><i class="d"></i></div>
<div class="inp" style="left:960px;top:40px;width:48px;">12 px</div>
<div style="left:945px;top:61px;width:26px;height:13px;border:1px solid #2a2a2a;background:#a1a1a1;"><svg style="left:3px;top:2px;" width="22" height="10" viewBox="0 0 22 10"><path d="M0 1H19V10" fill="none" stroke="#555" stroke-width="1.6"/></svg></div>
<div class="dd" style="left:972px;top:61px;width:12px"><i></i></div>
<div class="vsep" style="left:1015px;top:40px;height:36px"></div>
<svg style="left:1022px;top:41px;" width="14" height="13" viewBox="0 0 14 13"><rect x="0.5" y="0.5" width="12" height="12" fill="none" stroke="#d8d8d8"/><path d="M4.5 0v13M8.5 0v13" stroke="#d8d8d8"/></svg>
<svg style="left:1022px;top:62px;" width="14" height="13" viewBox="0 0 14 13"><rect x="0.5" y="0.5" width="12" height="12" fill="none" stroke="#d8d8d8"/><path d="M5 0v13M8 0v13" stroke="#d8d8d8"/><path d="M1 6.5h3M12 6.5h-3M3 5l1.5 1.5L3 8M10 5L8.500 6.5 10 8" stroke="#d8d8d8" fill="none"/></svg>
<div class="spin" style="left:1039px;top:40px"><i class="u"></i><i class="d"></i></div>
<div class="inp" style="left:1054px;top:40px;width:38px;">1</div>
<div class="spin" style="left:1039px;top:61px"><i class="u"></i><i class="d"></i></div>
<div class="inp" style="left:1054px;top:61px;width:38px;">11.806 p</div>
<div class="vsep" style="left:1096px;top:40px;height:36px"></div>
<svg style="left:1103px;top:41px;" width="17" height="11" viewBox="0 0 17 11"><path d="M0 0.5H7" stroke="#d8d8d8"/><path d="M0 2.5H7" stroke="#d8d8d8"/><path d="M0 4.5H7" stroke="#d8d8d8"/><path d="M0 6.5H7" stroke="#d8d8d8"/><path d="M0 8.5H7" stroke="#d8d8d8"/><path d="M0 10.5H7" stroke="#d8d8d8"/><path d="M9 0.5H16" stroke="#d8d8d8"/><path d="M9 2.5H16" stroke="#d8d8d8"/><path d="M9 4.5H16" stroke="#d8d8d8"/><path d="M9 6.5H16" stroke="#d8d8d8"/><path d="M9 8.5H16" stroke="#d8d8d8"/><path d="M9 10.5H16" stroke="#d8d8d8"/></svg>
<div style="left:1100px;top:59px;width:21px;height:19px;background:#2f2f2f;border:1px solid #2a2a2a;"><svg style="left:3px;top:4px;" width="17" height="13" viewBox="0 0 17 13"><path d="M0 0.5H7" stroke="#d8d8d8"/><path d="M0 2.5H7" stroke="#d8d8d8"/><path d="M0 4.5H7" stroke="#d8d8d8"/><path d="M0 6.5H7" stroke="#d8d8d8"/><path d="M0 8.5H7" stroke="#d8d8d8"/><path d="M0 10.5H7" stroke="#d8d8d8"/><path d="M9 0.5H16" stroke="#d8d8d8"/><path d="M9 2.5H16" stroke="#d8d8d8"/><path d="M9 4.5H16" stroke="#d8d8d8"/></svg></div>
<div class="vsep" style="left:1127px;top:40px;height:36px"></div>
<svg style="left:1151px;top:48px;" width="11" height="19" viewBox="0 0 11 19"><path d="M7 0L1 10h4.5L2.500 19 10 7H5.500z" fill="#d0d0d0"/></svg>
<div class="vsep" style="left:1171px;top:40px;height:36px"></div>
<svg style="left:1177px;top:52px;" width="15" height="9" viewBox="0 0 15 9"><path d="M0 2h5l-2.500 3z" fill="#d8d8d8"/><path d="M6 0.500h9M6 2.500h9M6 4.500h9M6 6.500h9M6 8.500h9" stroke="#d8d8d8"/></svg>
<div style="left:5px;top:82px;width:31px;height:11px;background:#2d2d2d;border-bottom:1px solid #262626;"><svg style="left:5px;top:3px;" width="8" height="7" viewBox="0 0 8 7"><path d="M0 0v7l4-3.500zM4 0v7l4-3.500z" fill="#c8c8c8"/></svg></div>
<div style="left:38px;top:82px;width:991px;height:19px;background:#2f2f2f;border-bottom:1px solid #262626;"></div>
<div style="left:38px;top:82px;width:194px;height:19px;background:#484848;box-shadow:inset 0 1px 0 #5a5a5a, inset 1px 0 0 #555;border-right:1px solid #2a2a2a;"><div class="t" style="left:9px;top:4px;font-size:11px;font-weight:bold;color:#ececec;text-shadow:0 1px 0 #1a1a1a;">*TravelGuide_Final.indd @ 60%</div><svg style="left:181px;top:6.5px;" width="6" height="6" viewBox="0 0 6 6"><path d="M0.500 0.500l5 5M5.500 0.500l-5 5" stroke="#e0e0e0" stroke-width="1.500"/></svg></div>
<div style="left:5px;top:94px;width:31px;height:899px;background:#484848;"></div>
<div style="left:36px;top:81px;width:2px;height:914px;background:#2c2c2c;"></div>
<div style="left:4px;top:81px;width:1px;height:914px;background:#2c2c2c;"></div>
<div class="grip" style="left:10px;top:97px;width:20px;height:5px;"></div>
<div style="left:8px;top:110px;width:22px;height:19px;background:#2e2e2e;border:1px solid #262626;border-radius:2px;"></div>
<svg style="left:10px;top:110px;" width="20" height="20" viewBox="0 0 20 20"><path d="M6 2v14l3.500-3.500 2.500 5.500 2-1-2.500-5.500H16z" fill="#2e2e2e" stroke="#e8e8e8" stroke-width="1.200" stroke-linejoin="round"/></svg>
<svg style="left:10px;top:131px;" width="20" height="20" viewBox="0 0 20 20"><path d="M6 2v14l3.500-3.500 2.500 5.500 2-1-2.500-5.500H16z" fill="#d6d6d6"/></svg>
<svg style="left:10px;top:152px;" width="20" height="20" viewBox="0 0 20 20"><path d="M4 3h7l4 4v10H4z" fill="#c8c8c8"/><path d="M11 3v4h4" fill="#888" stroke="#484848" stroke-width="0.800"/><path d="M12 11v8l2-2 1.500 3 1.500-0.800-1.500-3H18z" fill="#e8e8e8" stroke="#484848" stroke-width="0.600"/></svg>
<svg style="left:10px;top:172px;" width="20" height="20" viewBox="0 0 20 20"><path d="M1 4v12M19 4v12" stroke="#d6d6d6" stroke-width="1.600"/><path d="M4 10h12" stroke="#d6d6d6" stroke-width="1.400"/><path d="M7 7l-3.500 3L7 13M13 7l3.500 3L13 13" fill="none" stroke="#d6d6d6" stroke-width="1.400"/></svg>
<svg style="left:10px;top:193px;" width="20" height="20" viewBox="0 0 20 20"><path d="M4 9h12v9H4z" fill="none" stroke="#d6d6d6" stroke-width="1.600"/><path d="M6 12h2M9 12h2M12 12h2M6 15h2M9 15h2M12 15h2" stroke="#d6d6d6" stroke-width="1.600"/><path d="M7 2l4 4M11 3v3.500H7.500" stroke="#d6d6d6" stroke-width="1.500" fill="none"/><path d="M17 17h3v3z" fill="#d6d6d6" transform="translate(0,0)"/></svg>
<div style="left:6px;top:217px;width:29px;height:1px;background:#333;box-shadow:0 1px 0 #585858;"></div>
<div class="t" style="left:12px;top:220px;font-family:&quot;Liberation Serif&quot;,serif;font-size:22px;color:#dedede;">T</div>
<svg style="left:10px;top:221px;" width="20" height="20" viewBox="0 0 20 20"><path d="M17 17h3v3z" fill="#d6d6d6" transform="translate(0,0)"/></svg>
<svg style="left:10px;top:243px;" width="20" height="20" viewBox="0 0 20 20"><path d="M3 16L16 4" stroke="#d6d6d6" stroke-width="1.500"/></svg>
<svg style="left:10px;top:264px;" width="20" height="20" viewBox="0 0 20 20"><path d="M2 18l2-8 6-5 5 5-5 6z" fill="#b8b8b8"/><path d="M10 4l3-2 5 5-2 3z" fill="#d6d6d6"/><circle cx="8.500" cy="11.500" r="1.300" fill="#484848"/><path d="M2 18l6-6" stroke="#484848"/><path d="M17 17h3v3z" fill="#d6d6d6" transform="translate(0,0)"/></svg>
<svg style="left:10px;top:285px;" width="20" height="20" viewBox="0 0 20 20"><path d="M3 17l1.500-4.500 9-9 3 3-9 9z" fill="#c4c4c4"/><path d="M12 5l3 3" stroke="#484848"/><path d="M3 17l1-3 2 2z" fill="#eee"/><path d="M17 17h3v3z" fill="#d6d6d6" transform="translate(0,0)"/></svg>
<svg style="left:10px;top:306px;" width="20" height="20" viewBox="0 0 20 20"><rect x="3" y="4" width="14" height="12" fill="none" stroke="#d6d6d6" stroke-width="1.400"/><path d="M3 4l14 12M17 4L3 16" stroke="#d6d6d6" stroke-width="1.200"/><path d="M17 17h3v3z" fill="#d6d6d6" transform="translate(0,0)"/></svg>
<svg style="left:10px;top:327px;" width="20" height="20" viewBox="0 0 20 20"><defs><linearGradient id="rg" x1="0" y1="0" x2="1" y2="1"><stop offset="0" stop-color="#777"/><stop offset="1" stop-color="#999"/></linearGradient></defs><rect x="3" y="4" width="14" height="12" fill="url(#rg)" stroke="#d6d6d6" stroke-width="1.400"/><path d="M17 17h3v3z" fill="#d6d6d6" transform="translate(0,0)"/></svg>
<div style="left:6px;top:350px;width:29px;height:1px;background:#333;box-shadow:0 1px 0 #585858;"></div>
<svg style="left:10px;top:354px;" width="20" height="20" viewBox="0 0 20 20"><path d="M3 4l11 9M3 16l11-9" stroke="#d6d6d6" stroke-width="2.300"/><circle cx="15.500" cy="5.500" r="2.300" fill="none" stroke="#d6d6d6" stroke-width="1.400"/><circle cx="15.500" cy="14.500" r="2.300" fill="none" stroke="#d6d6d6" stroke-width="1.400"/></svg>
<svg style="left:10px;top:375px;" width="20" height="20" viewBox="0 0 20 20"><rect x="6.500" y="7.500" width="11" height="9" fill="none" stroke="#d6d6d6" stroke-dasharray="2 1.500"/><path d="M2 2v11l3-2.500 2 4 1.800-0.800-2-4H11z" fill="#d6d6d6"/><path d="M17 17h3v3z" fill="#d6d6d6" transform="translate(0,0)"/></svg>
<svg style="left:10px;top:396px;" width="20" height="20" viewBox="0 0 20 20"><defs><linearGradient id="g1"><stop offset="0" stop-color="#222"/><stop offset="1" stop-color="#ddd"/></linearGradient></defs><rect x="3" y="5" width="14" height="10" fill="url(#g1)" stroke="#d6d6d6" stroke-width="1.400"/></svg>
<svg style="left:10px;top:417px;" width="20" height="20" viewBox="0 0 20 20"><rect x="3" y="5" width="14" height="10" fill="#505050" stroke="#d6d6d6" stroke-width="1.400"/><rect x="3.0" y="5.0" width="2.800" height="3.300" fill="#e0e0e0" opacity="1.00"/><rect x="8.6" y="5.0" width="2.800" height="3.300" fill="#e0e0e0" opacity="1.00"/><rect x="14.2" y="5.0" width="2.800" height="3.300" fill="#e0e0e0" opacity="1.00"/><rect x="5.8" y="8.3" width="2.800" height="3.300" fill="#e0e0e0" opacity="0.67"/><rect x="11.4" y="8.3" width="2.800" height="3.300" fill="#e0e0e0" opacity="0.67"/><rect x="3.0" y="11.6" width="2.800" height="3.300" fill="#e0e0e0" opacity="0.34"/><rect x="8.6" y="11.6" width="2.800" height="3.300" fill="#e0e0e0" opacity="0.34"/><rect x="14.2" y="11.6" width="2.800" height="3.300" fill="#e0e0e0" opacity="0.34"/></svg>
<div style="left:6px;top:441px;width:29px;height:1px;background:#333;box-shadow:0 1px 0 #585858;"></div>
<svg style="left:10px;top:445px;" width="20" height="20" viewBox="0 0 20 20"><path d="M4 4h13v8l-4 4H4z" fill="#c8c8c8"/><path d="M6 7h9M6 9.500h9M6 12h5" stroke="#484848"/><path d="M13 16v-4h4" fill="#888"/></svg>
<svg style="left:10px;top:466px;" width="20" height="20" viewBox="0 0 20 20"><path d="M3 17l1-3 7-7 2 2-7 7z" fill="none" stroke="#d6d6d6" stroke-width="1.200"/><path d="M10 6l2-2 1 1 2-2.500 2 2L14.500 7l1 1-2 2z" fill="#d6d6d6"/><path d="M17 17h3v3z" fill="#d6d6d6" transform="translate(0,0)"/></svg>
<svg style="left:10px;top:487px;" width="20" height="20" viewBox="0 0 20 20"><path d="M6.500 12V5.500M9 11V3M11.500 11V3.500M14 12V5.500" stroke="#cfcfcf" stroke-width="2.100" stroke-linecap="round" fill="none"/><path d="M5.500 10.500h9.500v4l-1.500 3.500H8l-3.500-4.500-2-2.500a1.200 1.200 0 0 1 2-1.300l2 2z" fill="#cfcfcf"/></svg>
<svg style="left:10px;top:508px;" width="20" height="20" viewBox="0 0 20 20"><circle cx="8" cy="8" r="4.800" fill="#7a7a7a" stroke="#d6d6d6" stroke-width="1.600"/><path d="M11.500 11.500L17 17" stroke="#d6d6d6" stroke-width="2.600"/></svg>
<div style="left:6px;top:531px;width:29px;height:1px;background:#333;box-shadow:0 1px 0 #585858;"></div>
<div style="left:10px;top:537px;width:10px;height:10px;background:#fff;border:1px solid #888;"><svg style="left:0px;top:0px;" width="10" height="10" viewBox="0 0 10 10"><path d="M0 10L10 0" stroke="#f00" stroke-width="1.600"/></svg></div>
<div style="left:19px;top:545px;width:6px;height:6px;background:#3a3a3a;border:2px solid #fff;outline:1px solid #777;"><svg style="left:-2px;top:-2px;" width="10" height="10" viewBox="0 0 10 10"><path d="M0 10L10 0" stroke="#f00" stroke-width="1.600"/></svg></div>
<svg style="left:24px;top:536px;" width="6" height="7" viewBox="0 0 6 7"><path d="M0.500 1.500a4 4 0 0 1 4 4" fill="none" stroke="#d6d6d6"/><path d="M0 0v3l2-1.500zM3 5h3l-1.500 2z" fill="#d6d6d6"/></svg>
<div style="left:13px;top:561px;width:6px;height:6px;background:#484848;border:1px solid #ddd;"></div>
<div style="left:10px;top:558px;width:6px;height:6px;background:#fff;border:1px solid #ddd;"><svg style="left:0px;top:0px;" width="6" height="6" viewBox="0 0 6 6"><path d="M0 6L6 0" stroke="#f00"/></svg></div>
<div style="left:10px;top:573px;width:7px;height:7px;border:1px solid #d0d0d0;background:#3a3a3a;"></div>
<div class="t" style="left:23px;top:571px;font-family:&quot;Liberation Serif&quot;,serif;font-size:12px;font-weight:bold;color:#dedede;">T</div>
<div style="left:6px;top:585px;width:29px;height:1px;background:#333;box-shadow:0 1px 0 #585858;"></div>
<div style="left:8px;top:589px;width:23px;height:19px;background:#2e2e2e;border:1px solid #262626;border-radius:2px;"><div style="left:6px;top:3px;width:10px;height:10px;background:#fff;border:1px solid #999;"><svg style="left:0px;top:0px;" width="10" height="10" viewBox="0 0 10 10"><path d="M0 10L10 0" stroke="#f00" stroke-width="1.800"/></svg></div><svg style="left:19px;top:15px;" width="3" height="3" viewBox="0 0 3 3"><path d="M0 3h3V0z" fill="#d6d6d6"/></svg></div>
<div style="left:6px;top:612px;width:29px;height:1px;background:#333;box-shadow:0 1px 0 #585858;"></div>
<div style="left:8px;top:617px;width:23px;height:19px;background:#2e2e2e;border:1px solid #262626;border-radius:2px;"><svg style="left:6px;top:4px;" width="12" height="11" viewBox="0 0 12 11"><rect x="0.500" y="0.500" width="10" height="9" fill="none" stroke="#d6d6d6"/><rect x="0" y="0" width="11" height="2.500" fill="#d6d6d6"/><rect x="3.500" y="4.500" width="5" height="3" fill="none" stroke="#d6d6d6"/></svg><svg style="left:19px;top:15px;" width="3" height="3" viewBox="0 0 3 3"><path d="M0 3h3V0z" fill="#d6d6d6"/></svg></div>
<div style="left:1029px;top:81px;width:2px;height:914px;background:#2c2c2c;"></div>
<div style="left:1031px;top:82px;width:164px;height:11px;background:#2d2d2d;border-bottom:1px solid #262626;"></div>
<svg style="left:1183px;top:84px;" width="9" height="7" viewBox="0 0 9 7"><path d="M4 0v7l-4-3.500zM8.500 0v7l-4-3.500z" fill="#d0d0d0"/></svg>
<div style="left:1031px;top:94px;width:164px;height:899px;background:#484848;box-shadow:inset 0 1px 0 #585858;"></div>
<div style="left:1195px;top:81px;width:1.5px;height:914px;background:#2a2a2a;"></div>
<div style="left:1196.5px;top:81px;width:2.5px;height:914px;background:#4f4f4f;"></div>
<div class="grip" style="left:1103px;top:97px;width:20px;height:4px;"></div>
<div style="left:1035px;top:105px;width:154px;height:23px;background:#323232;border:1px solid #2a2a2a;border-radius:3px;box-shadow:0 1px 0 #555;"></div>
<svg style="left:1042px;top:108.5px;" width="19" height="18" viewBox="0 0 19 18"><rect x="1" y="-0.500" width="15" height="18" fill="#d6d6d6"/><rect x="1" y="-0.500" width="15" height="4.500" fill="#b4b4b4"/><rect x="2.500" y="1" width="2" height="1.500" fill="#3a3a3a"/><rect x="5.500" y="1" width="3.500" height="1.500" fill="#3a3a3a"/><rect x="10.500" y="1" width="3" height="1.500" fill="#3a3a3a"/><rect x="3" y="6" width="4" height="3.500" fill="#3a3a3a"/><path d="M8.500 6.500h5.500M8.500 8.500h5.500M3 11h11M3 13.500h3M3 15.500h3" stroke="#505050"/><rect x="7.500" y="12.500" width="6.500" height="3.500" fill="#3a3a3a"/></svg>
<div class="t dock" style="left:1068px;top:112.5px;">Articles</div>
<svg style="left:1042px;top:136.5px;" width="19" height="18" viewBox="0 0 19 18"><rect x="0.500" y="0.500" width="10" height="13" rx="1" fill="#777" stroke="#d2d2d2"/><rect x="5.500" y="6.500" width="13" height="10" rx="1" fill="#484848" stroke="#d2d2d2" stroke-width="1.200"/><rect x="8" y="9" width="8" height="2" fill="#d2d2d2"/><rect x="8" y="12.500" width="3" height="2.500" fill="#d2d2d2"/><path d="M12 13h4M12 15h4" stroke="#d2d2d2"/></svg>
<div class="t dock" style="left:1068px;top:140.5px;">Liquid Layout</div>
<div style="left:1031px;top:162px;width:164px;height:1px;background:#2e2e2e;box-shadow:0 1px 0 #545454;"></div>
<div class="grip" style="left:1103px;top:166px;width:20px;height:4px;"></div>
<svg style="left:1042px;top:177.5px;" width="19" height="18" viewBox="0 0 19 18"><path d="M0.500 4.500l3-3h4.500v14h-7.500zM10 1.500h4.500l3 3v11H10z" fill="#d2d2d2"/><path d="M9 0v17" stroke="#d2d2d2"/></svg>
<div class="t dock" style="left:1068px;top:181.5px;">Pages</div>
<svg style="left:1042px;top:205.5px;" width="19" height="18" viewBox="0 0 19 18"><path d="M9 1l8.500 5L9 11 0.500 6z" fill="#e0e0e0"/><path d="M2.500 10.500L0.500 12 9 17l8.500-5-2-1.500L9 14.500z" fill="#b4b4b4"/></svg>
<div class="t dock" style="left:1068px;top:209.5px;">Layers</div>
<svg style="left:1042px;top:233.5px;" width="19" height="18" viewBox="0 0 19 18"><path d="M7 5.500H4.500a3.500 3.500 0 0 0 0 7H7M11 5.500h2.500a3.500 3.500 0 0 1 0 7H11M6 9h6" fill="none" stroke="#d8d8d8" stroke-width="2"/></svg>
<div class="t dock" style="left:1068px;top:237.5px;">Links</div>
<div style="left:1031px;top:259px;width:164px;height:1px;background:#2e2e2e;box-shadow:0 1px 0 #545454;"></div>
<div class="grip" style="left:1103px;top:263px;width:20px;height:4px;"></div>
<svg style="left:1042px;top:274.5px;" width="19" height="18" viewBox="0 0 19 18"><path d="M0 3.500h18" stroke="#d2d2d2"/><path d="M0 8h18" stroke="#d2d2d2" stroke-width="2"/><path d="M0 13.500h18" stroke="#d2d2d2" stroke-width="3"/></svg>
<div class="t dock" style="left:1068px;top:278.5px;">Stroke</div>
<svg style="left:1042px;top:302.5px;" width="19" height="18" viewBox="0 0 19 18"><rect x="0.500" y="3.500" width="16" height="10" fill="#555" stroke="#d2d2d2"/><path d="M6 3.500v10M11 3.500v10M0.500 8.500h16" stroke="#d2d2d2"/><rect x="1" y="4" width="5" height="4.500" fill="#333"/><rect x="6.500" y="9" width="4.500" height="4.500" fill="#888"/></svg>
<div class="t dock" style="left:1068px;top:306.5px;">Swatches</div>
<svg style="left:1042px;top:330.5px;" width="19" height="18" viewBox="0 0 19 18"><defs><linearGradient id="dg"><stop offset="0" stop-color="#333"/><stop offset="1" stop-color="#ccc"/></linearGradient></defs><rect x="0.600" y="3.600" width="16" height="10.500" fill="url(#dg)" stroke="#d8d8d8" stroke-width="1.200"/></svg>
<div class="t dock" style="left:1068px;top:334.5px;">Gradient</div>
<div style="left:1031px;top:356px;width:164px;height:1px;background:#2e2e2e;box-shadow:0 1px 0 #545454;"></div>
<div class="grip" style="left:1103px;top:360px;width:20px;height:4px;"></div>
<svg style="left:1042px;top:371.5px;" width="19" height="18" viewBox="0 0 19 18"></svg>
<div class="t" style="left:1043px;top:370.5px;font-style:italic;font-size:18px;color:#d2d2d2;letter-spacing:-1px;">fx</div>
<div class="t dock" style="left:1068px;top:375.5px;">Effects</div>
<svg style="left:1042px;top:399.5px;" width="19" height="18" viewBox="0 0 19 18"><rect x="3.500" y="0.500" width="13" height="12" fill="#777" stroke="#d2d2d2" stroke-dasharray="4 2"/><rect x="0.500" y="8.500" width="5" height="5" fill="#484848" stroke="#d2d2d2"/><rect x="3.500" y="11.500" width="5" height="5" fill="#484848" stroke="#d2d2d2"/></svg>
<div class="t dock" style="left:1068px;top:403.5px;">Object Styles</div>
<div style="left:1031px;top:425px;width:164px;height:1px;background:#2e2e2e;box-shadow:0 1px 0 #545454;"></div>
<div class="grip" style="left:1103px;top:429px;width:20px;height:4px;"></div>
<svg style="left:1042px;top:440.5px;" width="19" height="18" viewBox="0 0 19 18"><path d="M16 1v12M13 1v12M16.500 1.500H12a3.500 3.500 0 0 0 0 7h1.500" fill="#d2d2d2" stroke="#d2d2d2" stroke-width="1.200"/><rect x="0.500" y="8.500" width="5" height="5" fill="#484848" stroke="#d2d2d2"/><rect x="3.500" y="11.500" width="5" height="5" fill="#484848" stroke="#d2d2d2"/></svg>
<div class="t dock" style="left:1068px;top:444.5px;">Paragraph Styles</div>
<div style="left:1031px;top:466px;width:164px;height:1px;background:#2e2e2e;box-shadow:0 1px 0 #545454;"></div>
<div class="grip" style="left:1103px;top:470px;width:20px;height:4px;"></div>
<svg style="left:1042px;top:481.5px;" width="19" height="18" viewBox="0 0 19 18"><rect x="0.500" y="9.500" width="5" height="5" fill="#484848" stroke="#d2d2d2"/><rect x="3.500" y="12.500" width="5" height="5" fill="#484848" stroke="#d2d2d2"/></svg>
<div class="t" style="left:1049px;top:477.5px;font-size:15px;color:#d8d8d8;">A</div>
<div class="t dock" style="left:1068px;top:485.5px;">Character Styles</div>
<div style="left:1031px;top:507px;width:164px;height:1px;background:#2e2e2e;box-shadow:0 1px 0 #545454;"></div>
<div style="left:821px;top:92px;width:208px;height:565px;background:#484848;border:1px solid #262626;box-shadow:-2px 2px 4px rgba(0,0,0,0.350);"></div>
<div style="left:822px;top:92px;width:207px;height:3px;background:#262626;"></div>
<div style="left:822px;top:95px;width:207px;height:16px;background:#343434;border-bottom:1px solid #2a2a2a;"></div>
<div style="left:822px;top:95px;width:50px;height:17px;background:#484848;border-right:1px solid #2a2a2a;box-shadow:inset 0 1px 0 #585858;"></div>
<div style="left:873px;top:96px;width:76px;height:15px;background:#383838;border-right:1px solid #2a2a2a;"></div>
<div class="t" style="left:829px;top:99px;transform:scaleX(0.92);transform-origin:0 0;font-size:10.500px;font-weight:bold;color:#f2f2f2;text-shadow:0 1px 0 #1a1a1a;">Articles</div>
<div class="t" style="left:879px;top:99px;transform:scaleX(0.91);transform-origin:0 0;font-size:10.500px;font-weight:bold;color:#a8a8a8;text-shadow:0 1px 0 #222;">Liquid Layout</div>
<svg style="left:989px;top:100px;" width="10" height="8" viewBox="0 0 10 8"><path d="M0 0v8l4.500-4zM5 0v8l4.500-4z" fill="#b4b4b4"/></svg>
<div style="left:1004px;top:98px;width:1px;height:11px;background:#6e6e6e;box-shadow:2px 0 0 #6e6e6e;"></div>
<svg style="left:1011px;top:100px;" width="14" height="8" viewBox="0 0 14 8"><path d="M0 1.500h5l-2.500 3z" fill="#d8d8d8"/><path d="M6 0.500h8M6 2.500h8M6 4.500h8M6 6.500h8" stroke="#d8d8d8"/></svg>
<div style="left:822px;top:114px;width:195px;height:519px;overflow:hidden;background:#484848;"><div style="left:0px;top:0px;width:195px;height:19px;border-bottom:1px solid #333;"><div style="left:4px;top:3px;width:11px;height:12px;border:1px solid #2a2a2a;background:#555;"></div><svg style="left:5px;top:3px;" width="13" height="12" viewBox="0 0 13 12"><path d="M2 6l3.500 4L11 1" fill="none" stroke="#f0f0f0" stroke-width="1.600"/></svg><svg style="left:23px;top:8px;" width="10" height="6" viewBox="0 0 10 6"><path d="M0 0h10l-5 5.500z" fill="#cfcfcf"/></svg><div class="t ptxt" style="left:38px;top:5.5px;">Travel Guide</div><div style="left:182px;top:7px;width:4px;height:4px;background:#4da3ff;border:1px solid #000;"></div></div><div style="left:0px;top:20px;width:195px;height:19px;border-bottom:1px solid #333;"><svg style="left:53px;top:4px;" width="11" height="12" viewBox="0 0 11 12"><rect x="0.600" y="0.600" width="9.800" height="10.800" fill="#3c3c3c" stroke="#e0e0e0" stroke-width="1.200"/><path d="M1 1l9 10M10 1L1 11" stroke="#e0e0e0" stroke-width="0.900"/></svg><div class="t ptxt" style="left:71.8px;top:5.5px;">&lt;615_Adobe_AI_Map...</div></div><div style="left:0px;top:40px;width:195px;height:19px;border-bottom:1px solid #333;"><svg style="left:53px;top:4px;" width="11" height="12" viewBox="0 0 11 12"><rect x="0.600" y="0.600" width="9.800" height="10.800" fill="#3c3c3c" stroke="#e0e0e0" stroke-width="1.200"/><path d="M1 1l9 10M10 1L1 11" stroke="#e0e0e0" stroke-width="0.900"/></svg><div class="t ptxt" style="left:71.8px;top:5.5px;">&lt;Campsite_Shot06_0...</div></div><div style="left:0px;top:60px;width:195px;height:19px;border-bottom:1px solid #333;"><div class="t ptxt" style="left:48.5px;top:5.5px;">&lt;line&gt;</div></div><div style="left:0px;top:80px;width:195px;height:19px;border-bottom:1px solid #333;"><div class="t" style="left:53px;top:3px;font-family:&quot;Liberation Serif&quot;,serif;font-weight:bold;font-size:13px;color:#f0f0f0;">T</div><div class="t ptxt" style="left:71.8px;top:5.5px;">&lt;Table of ContentsJ...</div></div><div style="left:0px;top:100px;width:195px;height:19px;border-bottom:1px solid #333;"><svg style="left:36px;top:5px;" width="6" height="10" viewBox="0 0 6 10"><path d="M0 0v10l5.500-5z" fill="#cfcfcf"/></svg><svg style="left:51px;top:2px;" width="14" height="14" viewBox="0 0 14 14"><rect x="0.500" y="0.500" width="8" height="8" fill="#777" stroke="#cfcfcf"/><rect x="4.500" y="4.500" width="8" height="8" fill="#888" fill-opacity="0.850" stroke="#cfcfcf"/></svg><div class="t ptxt" style="left:71.8px;top:5.5px;">&lt;group&gt;</div></div><div style="left:0px;top:120px;width:195px;height:19px;border-bottom:1px solid #333;"><div class="t" style="left:53px;top:3px;font-family:&quot;Liberation Serif&quot;,serif;font-weight:bold;font-size:13px;color:#f0f0f0;">T</div><div class="t ptxt" style="left:71.8px;top:5.5px;">&lt;Bushwhacking, rock ...</div></div><div style="left:0px;top:140px;width:195px;height:19px;border-bottom:1px solid #333;"><div class="t" style="left:53px;top:3px;font-family:&quot;Liberation Serif&quot;,serif;font-weight:bold;font-size:13px;color:#f0f0f0;">T</div><div class="t ptxt" style="left:71.8px;top:5.5px;">&lt;JONATHAN GOODM...</div></div><div style="left:0px;top:160px;width:195px;height:19px;border-bottom:1px solid #333;"><svg style="left:53px;top:4px;" width="11" height="12" viewBox="0 0 11 12"><rect x="0.600" y="0.600" width="9.800" height="10.800" fill="#3c3c3c" stroke="#e0e0e0" stroke-width="1.200"/><path d="M1 1l9 10M10 1L1 11" stroke="#e0e0e0" stroke-width="0.900"/></svg><div class="t ptxt" style="left:71.8px;top:5.5px;">&lt;Hiking_Shot03_0032...</div></div><div style="left:0px;top:180px;width:195px;height:19px;border-bottom:1px solid #333;"><svg style="left:53px;top:4px;" width="11" height="12" viewBox="0 0 11 12"><rect x="0.600" y="0.600" width="9.800" height="10.800" fill="#3c3c3c" stroke="#e0e0e0" stroke-width="1.200"/><path d="M1 1l9 10M10 1L1 11" stroke="#e0e0e0" stroke-width="0.900"/></svg><div class="t ptxt" style="left:71.8px;top:5.5px;">&lt;Hiking_Shot01_0236...</div></div><div style="left:0px;top:200px;width:195px;height:19px;border-bottom:1px solid #333;"><svg style="left:53px;top:4px;" width="11" height="12" viewBox="0 0 11 12"><rect x="0.600" y="0.600" width="9.800" height="10.800" fill="#3c3c3c" stroke="#e0e0e0" stroke-width="1.200"/><path d="M1 1l9 10M10 1L1 11" stroke="#e0e0e0" stroke-width="0.900"/></svg><div class="t ptxt" style="left:71.8px;top:5.5px;">&lt;Hiking_Shot05_0019...</div></div><div style="left:0px;top:220px;width:195px;height:19px;border-bottom:1px solid #333;"><svg style="left:53px;top:4px;" width="11" height="12" viewBox="0 0 11 12"><rect x="0.600" y="0.600" width="9.800" height="10.800" fill="#3c3c3c" stroke="#e0e0e0" stroke-width="1.200"/><path d="M1 1l9 10M10 1L1 11" stroke="#e0e0e0" stroke-width="0.900"/></svg><div class="t ptxt" style="left:71.8px;top:5.5px;">&lt;Waterfall_Shot01_0...</div></div><div style="left:0px;top:240px;width:195px;height:19px;border-bottom:1px solid #333;"><svg style="left:53px;top:4px;" width="11" height="12" viewBox="0 0 11 12"><rect x="0.600" y="0.600" width="9.800" height="10.800" fill="#3c3c3c" stroke="#e0e0e0" stroke-width="1.200"/><path d="M1 1l9 10M10 1L1 11" stroke="#e0e0e0" stroke-width="0.900"/></svg><div class="t ptxt" style="left:71.8px;top:5.5px;">&lt;Hiking_Shot02_0001...</div></div><div style="left:0px;top:260px;width:195px;height:19px;border-bottom:1px solid #333;"><svg style="left:53px;top:4px;" width="11" height="12" viewBox="0 0 11 12"><rect x="0.600" y="0.600" width="9.800" height="10.800" fill="#3c3c3c" stroke="#e0e0e0" stroke-width="1.200"/><path d="M1 1l9 10M10 1L1 11" stroke="#e0e0e0" stroke-width="0.900"/></svg><div class="t ptxt" style="left:71.8px;top:5.5px;">&lt;Hiking_Shot05_0332...</div></div><div style="left:0px;top:280px;width:195px;height:19px;border-bottom:1px solid #333;"><svg style="left:53px;top:4px;" width="11" height="12" viewBox="0 0 11 12"><rect x="0.600" y="0.600" width="9.800" height="10.800" fill="#3c3c3c" stroke="#e0e0e0" stroke-width="1.200"/><path d="M1 1l9 10M10 1L1 11" stroke="#e0e0e0" stroke-width="0.900"/></svg><div class="t ptxt" style="left:71.8px;top:5.5px;">&lt;Hiking_Shot06_0098...</div></div><div style="left:0px;top:300px;width:195px;height:19px;border-bottom:1px solid #333;"><svg style="left:53px;top:4px;" width="11" height="12" viewBox="0 0 11 12"><rect x="0.600" y="0.600" width="9.800" height="10.800" fill="#3c3c3c" stroke="#e0e0e0" stroke-width="1.200"/><path d="M1 1l9 10M10 1L1 11" stroke="#e0e0e0" stroke-width="0.900"/></svg><div class="t ptxt" style="left:71.8px;top:5.5px;">&lt;Hiking_Shot01_0275...</div></div><div style="left:0px;top:320px;width:195px;height:19px;border-bottom:1px solid #333;"><svg style="left:36px;top:5px;" width="6" height="10" viewBox="0 0 6 10"><path d="M0 0v10l5.500-5z" fill="#cfcfcf"/></svg><svg style="left:51px;top:2px;" width="14" height="14" viewBox="0 0 14 14"><rect x="0.500" y="0.500" width="8" height="8" fill="#777" stroke="#cfcfcf"/><rect x="4.500" y="4.500" width="8" height="8" fill="#888" fill-opacity="0.850" stroke="#cfcfcf"/></svg><div class="t ptxt" style="left:71.8px;top:5.5px;">&lt;group&gt;</div></div><div style="left:0px;top:340px;width:195px;height:19px;border-bottom:1px solid #333;"><div class="t" style="left:53px;top:3px;font-family:&quot;Liberation Serif&quot;,serif;font-weight:bold;font-size:13px;color:#f0f0f0;">T</div><div class="t ptxt" style="left:71.8px;top:5.5px;">&lt;avigating a maze of...</div></div><div style="left:0px;top:360px;width:195px;height:19px;border-bottom:1px solid #333;"><svg style="left:36px;top:5px;" width="6" height="10" viewBox="0 0 6 10"><path d="M0 0v10l5.500-5z" fill="#cfcfcf"/></svg><svg style="left:51px;top:2px;" width="14" height="14" viewBox="0 0 14 14"><rect x="0.500" y="0.500" width="8" height="8" fill="#777" stroke="#cfcfcf"/><rect x="4.500" y="4.500" width="8" height="8" fill="#888" fill-opacity="0.850" stroke="#cfcfcf"/></svg><div class="t ptxt" style="left:71.8px;top:5.5px;">&lt;group&gt;</div></div><div style="left:0px;top:380px;width:195px;height:19px;border-bottom:1px solid #333;background:#48546a;"><div class="t" style="left:53px;top:3px;font-family:&quot;Liberation Serif&quot;,serif;font-weight:bold;font-size:13px;color:#f0f0f0;">T</div><div class="t ptxt" style="left:71.8px;top:5.5px;font-weight:bold;color:#fff;letter-spacing:0.400px;">&lt;JOURNEYTO BA...</div><div style="left:182px;top:7px;width:4px;height:4px;background:#4da3ff;border:1px solid #000;"></div></div><div style="left:0px;top:400px;width:195px;height:19px;border-bottom:1px solid #333;"><div class="t" style="left:53px;top:3px;font-family:&quot;Liberation Serif&quot;,serif;font-weight:bold;font-size:13px;color:#f0f0f0;">T</div><div class="t ptxt" style="left:71.8px;top:5.5px;">&lt;Johanna rolls out of ...</div></div><div style="left:0px;top:420px;width:195px;height:19px;border-bottom:1px solid #333;"><div class="t" style="left:53px;top:3px;font-family:&quot;Liberation Serif&quot;,serif;font-weight:bold;font-size:13px;color:#f0f0f0;">T</div><div class="t ptxt" style="left:71.8px;top:5.5px;">&lt;SCALING THE CLIFF...</div></div><div style="left:0px;top:440px;width:195px;height:19px;border-bottom:1px solid #333;"><svg style="left:36px;top:5px;" width="6" height="10" viewBox="0 0 6 10"><path d="M0 0v10l5.500-5z" fill="#cfcfcf"/></svg><svg style="left:51px;top:2px;" width="14" height="14" viewBox="0 0 14 14"><rect x="0.500" y="0.500" width="8" height="8" fill="#777" stroke="#cfcfcf"/><rect x="4.500" y="4.500" width="8" height="8" fill="#888" fill-opacity="0.850" stroke="#cfcfcf"/></svg><div class="t ptxt" style="left:71.8px;top:5.5px;">&lt;group&gt;</div></div><div style="left:0px;top:460px;width:195px;height:19px;border-bottom:1px solid #333;"><div class="t" style="left:53px;top:3px;font-family:&quot;Liberation Serif&quot;,serif;font-weight:bold;font-size:13px;color:#f0f0f0;">T</div><div class="t ptxt" style="left:71.8px;top:5.5px;">&lt;TAKING THE PLUNG...</div></div><div style="left:0px;top:480px;width:195px;height:19px;border-bottom:1px solid #333;"><div class="t" style="left:53px;top:3px;font-family:&quot;Liberation Serif&quot;,serif;font-weight:bold;font-size:13px;color:#f0f0f0;">T</div><div class="t ptxt" style="left:71.8px;top:5.5px;">&lt;IndexBBacktracking ...</div></div></div>
<div style="left:1017px;top:113px;width:11px;height:520px;background:#3a3a3a;border-left:1px solid #2a2a2a;"></div>
<svg style="left:1019px;top:118px;" width="8" height="5" viewBox="0 0 8 5"><path d="M0 5h8l-4-5z" fill="#8a8a8a"/></svg>
<svg style="left:1019px;top:623px;" width="8" height="5" viewBox="0 0 8 5"><path d="M0 0h8l-4 5z" fill="#8a8a8a"/></svg>
<div style="left:822px;top:633px;width:207px;height:17px;background:#484848;border-top:1px solid #2a2a2a;box-shadow:inset 0 1px 0 #565656;"></div>
<div class="t ptxt" style="left:827px;top:638px;">Travel Guide</div>
<svg style="left:934px;top:637px;" width="10" height="10" viewBox="0 0 10 10"><path d="M5 0v10M0 5h10" stroke="#e0e0e0" stroke-width="1.800"/></svg>
<svg style="left:963px;top:637px;" width="11" height="10" viewBox="0 0 11 10"><path d="M2 0.500h8.500V9.500H4.500" fill="#d0d0d0"/><path d="M0.500 5.500h4v4z" fill="#e8e8e8"/></svg>
<svg style="left:992px;top:636px;" width="12" height="12" viewBox="0 0 12 12"><path d="M0.500 3.500h11M4 3V1.500h4V3" fill="none" stroke="#d8d8d8" stroke-width="1.300"/><path d="M2 5h8l-1 7H3z" fill="#d0d0d0"/><path d="M4.500 6v5M6 6v5M7.500 6v5" stroke="#484848" stroke-width="0.700"/></svg>
<svg style="left:1018px;top:641px;" width="10" height="8" viewBox="0 0 10 8"><rect x="6" y="0" width="1" height="1" fill="#0c0c0c"/><rect x="6" y="1" width="1" height="1" fill="#5a5a5a"/><rect x="8" y="0" width="1" height="1" fill="#0c0c0c"/><rect x="8" y="1" width="1" height="1" fill="#5a5a5a"/><rect x="4" y="2" width="1" height="1" fill="#0c0c0c"/><rect x="4" y="3" width="1" height="1" fill="#5a5a5a"/><rect x="6" y="2" width="1" height="1" fill="#0c0c0c"/><rect x="6" y="3" width="1" height="1" fill="#5a5a5a"/><rect x="8" y="2" width="1" height="1" fill="#0c0c0c"/><rect x="8" y="3" width="1" height="1" fill="#5a5a5a"/><rect x="2" y="4" width="1" height="1" fill="#0c0c0c"/><rect x="2" y="5" width="1" height="1" fill="#5a5a5a"/><rect x="4" y="4" width="1" height="1" fill="#0c0c0c"/><rect x="4" y="5" width="1" height="1" fill="#5a5a5a"/><rect x="6" y="4" width="1" height="1" fill="#0c0c0c"/><rect x="6" y="5" width="1" height="1" fill="#5a5a5a"/><rect x="8" y="4" width="1" height="1" fill="#0c0c0c"/><rect x="8" y="5" width="1" height="1" fill="#5a5a5a"/><rect x="0" y="6" width="1" height="1" fill="#0c0c0c"/><rect x="0" y="7" width="1" height="1" fill="#5a5a5a"/><rect x="2" y="6" width="1" height="1" fill="#0c0c0c"/><rect x="2" y="7" width="1" height="1" fill="#5a5a5a"/><rect x="4" y="6" width="1" height="1" fill="#0c0c0c"/><rect x="4" y="7" width="1" height="1" fill="#5a5a5a"/><rect x="6" y="6" width="1" height="1" fill="#0c0c0c"/><rect x="6" y="7" width="1" height="1" fill="#5a5a5a"/><rect x="8" y="6" width="1" height="1" fill="#0c0c0c"/><rect x="8" y="7" width="1" height="1" fill="#5a5a5a"/></svg>
<div style="left:822px;top:650px;width:207px;height:7px;background:#4a4a4a;border-top:1px solid #2a2a2a;"></div>
<div class="grip" style="left:915px;top:652px;width:20px;height:4px;"></div>
<div id="winb"></div>
</div></body></html>
